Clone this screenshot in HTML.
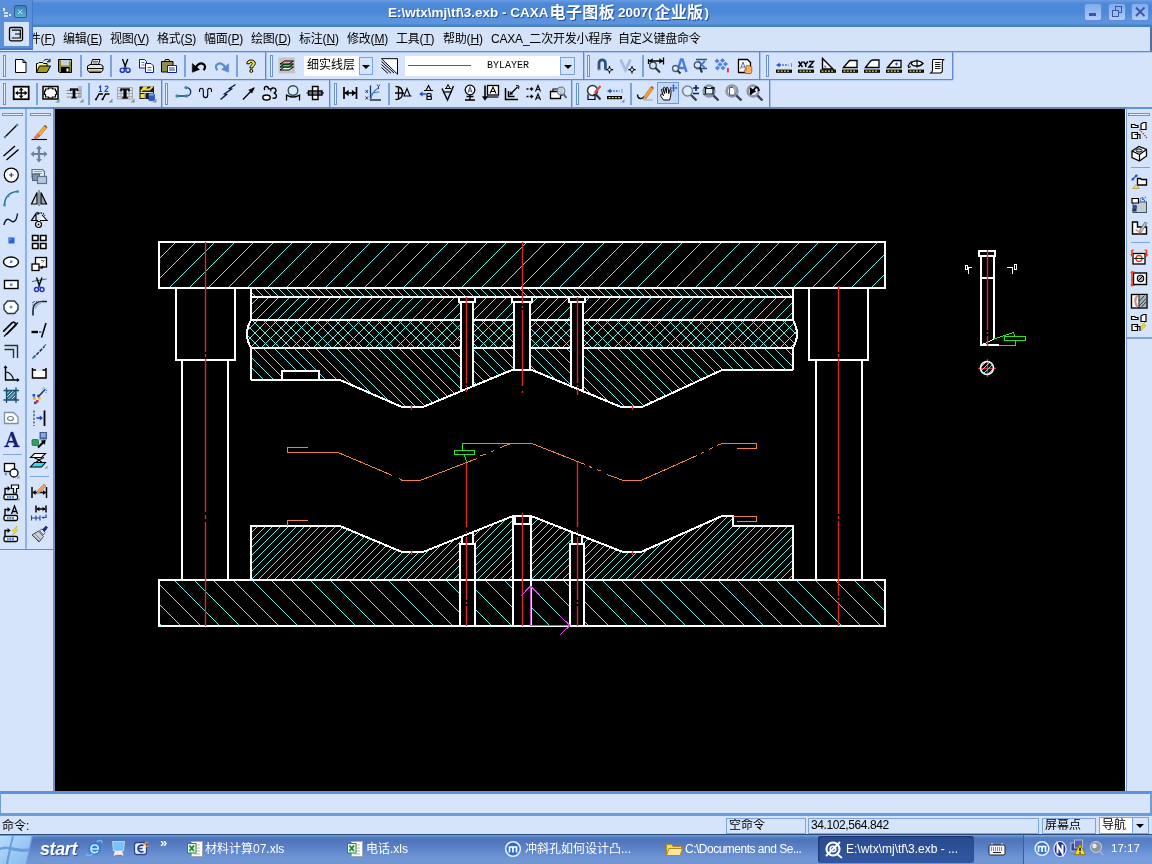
<!DOCTYPE html><html><head><meta charset="utf-8"><title>CAXA</title><style>
*{box-sizing:border-box;margin:0;padding:0}
html,body{width:1152px;height:864px;overflow:hidden;background:#d5e4fa}
body{position:relative;font-family:"Liberation Sans","Noto Sans CJK SC",sans-serif;font-size:12px;color:#000}
.abs{position:absolute}
#menu,#title,#status,#task,.gt{-webkit-mask-image:linear-gradient(#000,#000);mask-image:linear-gradient(#000,#000)}
#title{left:0;top:0;width:1152px;height:27px;background:linear-gradient(#6c9ee2 0,#5a90dc 2px,#4c88d8 4px,#4c88d8 12px,#5a94dc 19px,#5a94dc 24px,#4a80c8 25px,#4a80c8 27px)}
#title .t{position:absolute;color:#fff;font-weight:bold;white-space:pre;text-shadow:1px 1px 0 #2a4f96}
.wb{position:absolute;top:3px;width:18px;height:18px;border:1px solid #5f8cd8;border-radius:3px;background:linear-gradient(#80acec,#98bcf2 55%,#b0cef8)}
#menu{left:0;top:27px;width:1152px;height:24px;background:#d5e3f8}
#menu span{position:absolute;top:2px;white-space:nowrap;font-size:12px;letter-spacing:-0.2px}
#menu u{text-decoration:underline}
#tb{left:0;top:51px;width:1152px;height:57px;background:#d5e4fa}
.hl{position:absolute;height:1px;background:#7ba4dc}
.vl{position:absolute;width:1px;background:#7ba4dc}
#canvas{left:55px;top:109px;width:1070px;height:682px;background:#000}
#leftp{left:0;top:108px;width:55px;height:683px;background:#d5e4fa;border-right:2px solid #7890c0}
#rightp{left:1125px;top:108px;width:27px;height:683px;background:#d5e4fa;border-left:1px solid #e4f0fe;box-shadow:inset 1px 0 0 #7c9cd0}
#cmd{left:0;top:791px;width:1152px;height:25px;background:#d6e5fa;border-top:3px solid #5f92da;border-bottom:3px solid #6d9cdc;border-left:1px solid #6d9cdc;border-right:2px solid #6d9cdc}
#status{left:0;top:816px;width:1152px;height:18px;background:#d5e4fa}
.sf{position:absolute;top:2px;height:16px;border:1px solid #7ba4dc;font-size:12px;line-height:13px;padding-left:2px;white-space:nowrap;overflow:hidden}
#task{left:0;top:834px;width:1152px;height:30px;background:linear-gradient(#2c4c7c 0,#2c4c7c 1px,#6c98d0 1px,#6c98d0 2px,#5482c4 3px,#4c74bc 5px,#5678bc 9px,#5a82c8 14px,#668cd0 19px,#7096d4 25px,#7096d4 30px);color:#fff}
#task .b{position:absolute;top:0;height:30px;font-size:12px;line-height:30px;white-space:nowrap;color:#fff}
.grip{position:absolute;width:3px;border:1px solid #6a92d0;background:#e4eefc}
.gripH{position:absolute;height:3px;border:1px solid #6a92d0;background:#e4eefc}
.ic{position:absolute;overflow:visible}
</style></head><body><div id="title" class="abs"><span class="t" style="left:388px;top:5px;font-size:13.5px">E:\wtx\mj\tf\3.exb - CAXA</span><span class="t" style="left:549.5px;top:-1px;font-size:16px;letter-spacing:0.4px">电子图板</span><span class="t" style="left:618px;top:5px;font-size:13.5px">2007(</span><span class="t" style="left:654.5px;top:-1px;font-size:16px;letter-spacing:0.3px">企业版</span><span class="t" style="left:704.5px;top:5px;font-size:13.5px">)</span><div class="wb" style="left:1084px"><div style="position:absolute;left:4px;top:9px;width:7px;height:3px;background:#3a56a0"></div></div><div class="wb" style="left:1108px"><div style="position:absolute;left:6px;top:2px;width:7px;height:7px;border:1.5px solid #3a56a0"></div><div style="position:absolute;left:3px;top:5.500px;width:7px;height:7px;border:1.5px solid #3a56a0;background:#9cc0f0"></div></div><div class="wb" style="left:1131px"><svg width="18" height="18" style="position:absolute;left:-1px;top:-1px"><path d="M5 4.500l8.500 8.500M13.500 4.500l-8.500 8.500" stroke="#3a56a0" stroke-width="1.800"/></svg></div></div><div id="menu" class="abs"><span style="left:17px">文件(<u>F</u>)</span><span style="left:63px">编辑(<u>E</u>)</span><span style="left:110px">视图(<u>V</u>)</span><span style="left:157px">格式(<u>S</u>)</span><span style="left:204px">幅面(<u>P</u>)</span><span style="left:251px">绘图(<u>D</u>)</span><span style="left:299px">标注(<u>N</u>)</span><span style="left:347px">修改(<u>M</u>)</span><span style="left:396px">工具(<u>T</u>)</span><span style="left:443px">帮助(<u>H</u>)</span><span style="left:491px">CAXA_二次开发小程序</span><span style="left:618px">自定义键盘命令</span></div><div id="tb" class="abs"></div><div class="abs" style="left:1150px;top:27px;width:2px;height:25px;background:#54709c"></div><div id="leftp" class="abs"></div><div id="rightp" class="abs"></div><div id="canvas" class="abs"><svg width="1070" height="682" viewBox="55 109 1070 682" shape-rendering="crispEdges" style="position:absolute;left:0;top:0"><defs><clipPath id="cTop"><path d="M159 242L885 242L885 288L159 288Z"/></clipPath><clipPath id="cThin"><path d="M251 288L793 288L793 297L251 297Z"/></clipPath><clipPath id="cP2"><path d="M251 297L793 297L793 320L251 320Z"/></clipPath><clipPath id="cRub"><path d="M251 320L793 320L796 325L797 334L796 343L793 348L251 348L248 343L247 334L248 325Z"/></clipPath><clipPath id="cUD"><path d="M251 348L793 348L793 370L722 370L642 407L621 407L532 370L512 370L423 407L402 407L340 380L251 380Z"/></clipPath><clipPath id="cLD"><path d="M251 526L340 526L402 552L423 552L513 516L531 516L623 552L641 552L722 516L733 516L733 526L793 526L793 580L251 580Z"/></clipPath><clipPath id="cBot"><path d="M159 580L885 580L885 626L159 626Z"/></clipPath></defs><path clip-path="url(#cTop)" d="M130.0 288L176.0 242M150.0 288L196.0 242M169.0 288L215.0 242M189.0 288L235.0 242M208.0 288L254.0 242M228.0 288L274.0 242M247.0 288L293.0 242M267.0 288L313.0 242M286.0 288L332.0 242M306.0 288L352.0 242M325.0 288L371.0 242M345.0 288L391.0 242M364.0 288L410.0 242M384.0 288L430.0 242M403.0 288L449.0 242M422.0 288L468.0 242M442.0 288L488.0 242M461.0 288L507.0 242M481.0 288L527.0 242M500.0 288L546.0 242M520.0 288L566.0 242M539.0 288L585.0 242M559.0 288L605.0 242M578.0 288L624.0 242M598.0 288L644.0 242M617.0 288L663.0 242M637.0 288L683.0 242M656.0 288L702.0 242M676.0 288L722.0 242M695.0 288L741.0 242M715.0 288L761.0 242M734.0 288L780.0 242M754.0 288L800.0 242M773.0 288L819.0 242M793.0 288L839.0 242M812.0 288L858.0 242M832.0 288L878.0 242M851.0 288L897.0 242M871.0 288L917.0 242" stroke="#68ece2" stroke-width="1" fill="none" shape-rendering="geometricPrecision"/><path clip-path="url(#cThin)" d="M247.0 288L256.0 297M255.0 288L264.0 297M263.0 288L272.0 297M270.0 288L279.0 297M278.0 288L287.0 297M286.0 288L295.0 297M294.0 288L303.0 297M301.0 288L310.0 297M309.0 288L318.0 297M317.0 288L326.0 297M325.0 288L334.0 297M333.0 288L342.0 297M340.0 288L349.0 297M348.0 288L357.0 297M356.0 288L365.0 297M364.0 288L373.0 297M371.0 288L380.0 297M379.0 288L388.0 297M387.0 288L396.0 297M395.0 288L404.0 297M402.0 288L411.0 297M410.0 288L419.0 297M418.0 288L427.0 297M426.0 288L435.0 297M434.0 288L443.0 297M441.0 288L450.0 297M449.0 288L458.0 297M457.0 288L466.0 297M465.0 288L474.0 297M472.0 288L481.0 297M480.0 288L489.0 297M488.0 288L497.0 297M496.0 288L505.0 297M503.0 288L512.0 297M511.0 288L520.0 297M519.0 288L528.0 297M527.0 288L536.0 297M535.0 288L544.0 297M542.0 288L551.0 297M550.0 288L559.0 297M558.0 288L567.0 297M566.0 288L575.0 297M573.0 288L582.0 297M581.0 288L590.0 297M589.0 288L598.0 297M597.0 288L606.0 297M604.0 288L613.0 297M612.0 288L621.0 297M620.0 288L629.0 297M628.0 288L637.0 297M636.0 288L645.0 297M643.0 288L652.0 297M651.0 288L660.0 297M659.0 288L668.0 297M667.0 288L676.0 297M674.0 288L683.0 297M682.0 288L691.0 297M690.0 288L699.0 297M698.0 288L707.0 297M705.0 288L714.0 297M713.0 288L722.0 297M721.0 288L730.0 297M729.0 288L738.0 297M737.0 288L746.0 297M744.0 288L753.0 297M752.0 288L761.0 297M760.0 288L769.0 297M768.0 288L777.0 297M775.0 288L784.0 297M783.0 288L792.0 297M791.0 288L800.0 297" stroke="#68ece2" stroke-width="1" fill="none" shape-rendering="geometricPrecision"/><path clip-path="url(#cP2)" d="M236.0 320L259.0 297M246.0 320L269.0 297M256.0 320L279.0 297M267.0 320L290.0 297M277.0 320L300.0 297M287.0 320L310.0 297M298.0 320L321.0 297M308.0 320L331.0 297M318.0 320L341.0 297M329.0 320L352.0 297M339.0 320L362.0 297M350.0 320L373.0 297M360.0 320L383.0 297M370.0 320L393.0 297M381.0 320L404.0 297M391.0 320L414.0 297M401.0 320L424.0 297M412.0 320L435.0 297M422.0 320L445.0 297M432.0 320L455.0 297M443.0 320L466.0 297M453.0 320L476.0 297M464.0 320L487.0 297M474.0 320L497.0 297M484.0 320L507.0 297M495.0 320L518.0 297M505.0 320L528.0 297M515.0 320L538.0 297M526.0 320L549.0 297M536.0 320L559.0 297M546.0 320L569.0 297M557.0 320L580.0 297M567.0 320L590.0 297M578.0 320L601.0 297M588.0 320L611.0 297M598.0 320L621.0 297M609.0 320L632.0 297M619.0 320L642.0 297M629.0 320L652.0 297M640.0 320L663.0 297M650.0 320L673.0 297M661.0 320L684.0 297M671.0 320L694.0 297M681.0 320L704.0 297M692.0 320L715.0 297M702.0 320L725.0 297M712.0 320L735.0 297M723.0 320L746.0 297M733.0 320L756.0 297M743.0 320L766.0 297M754.0 320L777.0 297M764.0 320L787.0 297M775.0 320L798.0 297M785.0 320L808.0 297" stroke="#68ece2" stroke-width="1" fill="none" shape-rendering="geometricPrecision"/><path clip-path="url(#cRub)" d="M219.0 348L247.0 320M230.0 348L258.0 320M240.0 348L268.0 320M250.0 348L278.0 320M261.0 348L289.0 320M271.0 348L299.0 320M281.0 348L309.0 320M292.0 348L320.0 320M302.0 348L330.0 320M313.0 348L341.0 320M323.0 348L351.0 320M333.0 348L361.0 320M344.0 348L372.0 320M354.0 348L382.0 320M365.0 348L393.0 320M375.0 348L403.0 320M385.0 348L413.0 320M396.0 348L424.0 320M406.0 348L434.0 320M416.0 348L444.0 320M427.0 348L455.0 320M437.0 348L465.0 320M448.0 348L476.0 320M458.0 348L486.0 320M468.0 348L496.0 320M479.0 348L507.0 320M489.0 348L517.0 320M499.0 348L527.0 320M510.0 348L538.0 320M520.0 348L548.0 320M531.0 348L559.0 320M541.0 348L569.0 320M551.0 348L579.0 320M562.0 348L590.0 320M572.0 348L600.0 320M582.0 348L610.0 320M593.0 348L621.0 320M603.0 348L631.0 320M614.0 348L642.0 320M624.0 348L652.0 320M634.0 348L662.0 320M645.0 348L673.0 320M655.0 348L683.0 320M666.0 348L694.0 320M676.0 348L704.0 320M686.0 348L714.0 320M697.0 348L725.0 320M707.0 348L735.0 320M717.0 348L745.0 320M728.0 348L756.0 320M738.0 348L766.0 320M749.0 348L777.0 320M759.0 348L787.0 320M769.0 348L797.0 320M780.0 348L808.0 320M790.0 348L818.0 320" stroke="#68ece2" stroke-width="1" fill="none" shape-rendering="geometricPrecision"/><path clip-path="url(#cRub)" d="M221.0 320L249.0 348M232.0 320L260.0 348M242.0 320L270.0 348M252.0 320L280.0 348M263.0 320L291.0 348M273.0 320L301.0 348M283.0 320L311.0 348M294.0 320L322.0 348M304.0 320L332.0 348M315.0 320L343.0 348M325.0 320L353.0 348M335.0 320L363.0 348M346.0 320L374.0 348M356.0 320L384.0 348M366.0 320L394.0 348M377.0 320L405.0 348M387.0 320L415.0 348M398.0 320L426.0 348M408.0 320L436.0 348M418.0 320L446.0 348M429.0 320L457.0 348M439.0 320L467.0 348M450.0 320L478.0 348M460.0 320L488.0 348M470.0 320L498.0 348M481.0 320L509.0 348M491.0 320L519.0 348M501.0 320L529.0 348M512.0 320L540.0 348M522.0 320L550.0 348M533.0 320L561.0 348M543.0 320L571.0 348M553.0 320L581.0 348M564.0 320L592.0 348M574.0 320L602.0 348M584.0 320L612.0 348M595.0 320L623.0 348M605.0 320L633.0 348M616.0 320L644.0 348M626.0 320L654.0 348M636.0 320L664.0 348M647.0 320L675.0 348M657.0 320L685.0 348M668.0 320L696.0 348M678.0 320L706.0 348M688.0 320L716.0 348M699.0 320L727.0 348M709.0 320L737.0 348M719.0 320L747.0 348M730.0 320L758.0 348M740.0 320L768.0 348M751.0 320L779.0 348M761.0 320L789.0 348M771.0 320L799.0 348M782.0 320L810.0 348M792.0 320L820.0 348" stroke="#68ece2" stroke-width="1" fill="none" shape-rendering="geometricPrecision"/><path clip-path="url(#cUD)" d="M201.0 348L261.0 408M211.0 348L271.0 408M221.0 348L281.0 408M232.0 348L292.0 408M242.0 348L302.0 408M253.0 348L313.0 408M263.0 348L323.0 408M274.0 348L334.0 408M284.0 348L344.0 408M294.0 348L354.0 408M305.0 348L365.0 408M315.0 348L375.0 408M326.0 348L386.0 408M336.0 348L396.0 408M347.0 348L407.0 408M357.0 348L417.0 408M367.0 348L427.0 408M378.0 348L438.0 408M388.0 348L448.0 408M399.0 348L459.0 408M409.0 348L469.0 408M420.0 348L480.0 408M430.0 348L490.0 408M440.0 348L500.0 408M451.0 348L511.0 408M461.0 348L521.0 408M472.0 348L532.0 408M482.0 348L542.0 408M493.0 348L553.0 408M503.0 348L563.0 408M513.0 348L573.0 408M524.0 348L584.0 408M534.0 348L594.0 408M545.0 348L605.0 408M555.0 348L615.0 408M566.0 348L626.0 408M576.0 348L636.0 408M586.0 348L646.0 408M597.0 348L657.0 408M607.0 348L667.0 408M618.0 348L678.0 408M628.0 348L688.0 408M639.0 348L699.0 408M649.0 348L709.0 408M659.0 348L719.0 408M670.0 348L730.0 408M680.0 348L740.0 408M691.0 348L751.0 408M701.0 348L761.0 408M712.0 348L772.0 408M722.0 348L782.0 408M732.0 348L792.0 408M743.0 348L803.0 408M753.0 348L813.0 408M764.0 348L824.0 408M774.0 348L834.0 408M785.0 348L845.0 408" stroke="#68ece2" stroke-width="1" fill="none" shape-rendering="geometricPrecision"/><path clip-path="url(#cLD)" d="M188.0 580L254.0 514M196.0 580L262.0 514M204.0 580L270.0 514M212.0 580L278.0 514M219.0 580L285.0 514M227.0 580L293.0 514M235.0 580L301.0 514M243.0 580L309.0 514M251.0 580L317.0 514M258.0 580L324.0 514M266.0 580L332.0 514M274.0 580L340.0 514M282.0 580L348.0 514M290.0 580L356.0 514M297.0 580L363.0 514M305.0 580L371.0 514M313.0 580L379.0 514M321.0 580L387.0 514M329.0 580L395.0 514M336.0 580L402.0 514M344.0 580L410.0 514M352.0 580L418.0 514M360.0 580L426.0 514M367.0 580L433.0 514M375.0 580L441.0 514M383.0 580L449.0 514M391.0 580L457.0 514M399.0 580L465.0 514M406.0 580L472.0 514M414.0 580L480.0 514M422.0 580L488.0 514M430.0 580L496.0 514M438.0 580L504.0 514M445.0 580L511.0 514M453.0 580L519.0 514M461.0 580L527.0 514M469.0 580L535.0 514M477.0 580L543.0 514M484.0 580L550.0 514M492.0 580L558.0 514M500.0 580L566.0 514M508.0 580L574.0 514M516.0 580L582.0 514M523.0 580L589.0 514M531.0 580L597.0 514M539.0 580L605.0 514M547.0 580L613.0 514M554.0 580L620.0 514M562.0 580L628.0 514M570.0 580L636.0 514M578.0 580L644.0 514M586.0 580L652.0 514M593.0 580L659.0 514M601.0 580L667.0 514M609.0 580L675.0 514M617.0 580L683.0 514M625.0 580L691.0 514M632.0 580L698.0 514M640.0 580L706.0 514M648.0 580L714.0 514M656.0 580L722.0 514M664.0 580L730.0 514M671.0 580L737.0 514M679.0 580L745.0 514M687.0 580L753.0 514M695.0 580L761.0 514M702.0 580L768.0 514M710.0 580L776.0 514M718.0 580L784.0 514M726.0 580L792.0 514M734.0 580L800.0 514M741.0 580L807.0 514M749.0 580L815.0 514M757.0 580L823.0 514M765.0 580L831.0 514M773.0 580L839.0 514M780.0 580L846.0 514M788.0 580L854.0 514" stroke="#68ece2" stroke-width="1" fill="none" shape-rendering="geometricPrecision"/><path clip-path="url(#cBot)" d="M116.0 580L162.0 626M135.0 580L181.0 626M155.0 580L201.0 626M174.0 580L220.0 626M194.0 580L240.0 626M213.0 580L259.0 626M233.0 580L279.0 626M252.0 580L298.0 626M271.0 580L317.0 626M291.0 580L337.0 626M310.0 580L356.0 626M330.0 580L376.0 626M349.0 580L395.0 626M369.0 580L415.0 626M388.0 580L434.0 626M407.0 580L453.0 626M427.0 580L473.0 626M446.0 580L492.0 626M466.0 580L512.0 626M485.0 580L531.0 626M504.0 580L550.0 626M524.0 580L570.0 626M543.0 580L589.0 626M563.0 580L609.0 626M582.0 580L628.0 626M602.0 580L648.0 626M621.0 580L667.0 626M640.0 580L686.0 626M660.0 580L706.0 626M679.0 580L725.0 626M699.0 580L745.0 626M718.0 580L764.0 626M737.0 580L783.0 626M757.0 580L803.0 626M776.0 580L822.0 626M796.0 580L842.0 626M815.0 580L861.0 626M835.0 580L881.0 626M854.0 580L900.0 626M873.0 580L919.0 626" stroke="#68ece2" stroke-width="1" fill="none" shape-rendering="geometricPrecision"/><path d="M459 297L475 297L475 302L473 302L473 420L461 420L461 302L459 302ZM512 297L532 297L532 302L530 302L530 420L514 420L514 302L512 302ZM569 297L585 297L585 302L583 302L583 420L571 420L571 302L569 302ZM282 371L319 371L319 381L282 381ZM460 544L462 544L462 500L473 500L473 544L475 544L475 626L460 626ZM513 524L515 524L515 500L530 500L530 524L531 524L531 626L513 626ZM570 544L572 544L572 500L582 500L582 544L584 544L584 626L570 626Z" fill="#000"/><path d="M159 242L885 242L885 288L159 288ZM159 580L885 580L885 626L159 626ZM176 288L176 360L235 360L235 288M182 360L182 580M228 360L228 580M809 288L809 360L868 360L868 288M816 360L816 580M862 360L862 580M251 288L251 320M793 288L793 320M251 348L251 380M793 348L793 370M251 297L793 297M251 320L461 320M473 320L514 320M530 320L571 320M583 320L793 320M251 348L461 348M473 348L514 348M530 348L571 348M583 348L793 348M251 320Q243 334 251 348M793 320Q801 334 793 348M251 380L340 380L402 407L423 407L512 370L532 370L621 407L642 407L722 370L793 370M282 380L282 371L319 371L319 380M459 297L459 302L475 302L475 297M461 302L461 391.202M473 302L473 386.213M512 297L512 302L532 302L532 297M514 302L514 370M530 302L530 370M569 297L569 302L585 302L585 297M571 302L571 386.213M583 302L583 391.202M251 580L251 526L340 526L402 552L423 552L513 516L531 516L623 552L641 552L722 516L733 516L733 526L793 526L793 580M462 536.4L462 544M473 532L473 544M460 626L460 544L475 544L475 626M515 516L515 524M530 516L530 524M513 516L513 626M531 516L531 626M513 524L531 524M572 532.043L572 544M582 535.957L582 544M570 626L570 544L584 544L584 626M979 251L995 251L995 256L979 256ZM981 256L981 345L999 345M994 256L994 339M981 278L994 278" stroke="#ffffff" stroke-width="2" fill="none" stroke-linejoin="miter"/><path d="M982.5 344.5L994 339" stroke="#fff" stroke-width="1" fill="none"/><path d="M205.5 242V352M205.5 354V357M205.5 359V512M205.5 515V519M205.5 522V626M838.5 286V352M838.5 354V357M838.5 359V514M838.5 516V519M838.5 521V596M838.5 598V600M838.5 602V626M466.5 297V383M466.5 385V387M466.5 389V392M466.5 461V527M466.5 531V533M466.5 537V600M466.5 602V604M466.5 606V626M522.5 242V304M522.5 306V308M522.5 310V386M522.5 391V393M522.5 513V626M577.5 297V383M577.5 385V387M577.5 389V395M577.5 462V527M577.5 531V533M577.5 537V600M577.5 602V604M577.5 606V626M411.5 405V410M632.5 405V410M411.5 551V555M632.5 551V555M987.5 250V330M987.5 332V334M987.5 336V346M978 368.5H996M987.5 359V377" stroke="#dc2630" stroke-width="1.4" fill="none" shape-rendering="geometricPrecision"/><path d="M308.0 447.5L287.5 447.5L287.5 452.5L338.0 452.5L392.5 475.5M399.0 478.5L402.5 480.5L420.0 480.5L477.0 458.5M480.5 456.0L486.0 454.0M491.5 451.5L494.5 450.5M500.5 447.5L511.0 443.5L532.0 443.5L585.0 464.5M589.0 466.5L592.0 467.5M597.0 469.5L601.0 471.0M607.0 474.5L623.5 480.5L641.0 480.5L697.0 455.5M701.0 453.5L704.0 452.0M709.0 449.5L713.0 447.5M717.0 445.5L722.0 443.5L756.5 443.5L756.5 448.5L737.0 448.5M308.0 520.5L287.5 520.5L287.5 525.5M733.0 516.5L756.5 516.5L756.5 521.5L737.0 521.5" stroke="#e8873c" stroke-width="1" fill="none"/><path d="M462.5 450.5V443.5H511M454.5 450.5H474.5V454.5H454.5ZM464 454.5L466.5 461M994 339L1013.5 332.5L1014.5 336M1004.5 336.5H1025.5V340.5H1004.5ZM1015.5 340.5V345.5H999" stroke="#30e030" stroke-width="1" fill="none"/><path d="M530.5 625.5V586M530.5 586L521 596M530.5 586L540 595.5M530.5 625.5H570M570 625.5L560 616M570 625.5L560.5 634.5" stroke="#e040e8" stroke-width="1" fill="none"/><clipPath id="cCirc"><circle cx="987" cy="368" r="6.5"/></clipPath><path clip-path="url(#cCirc)" d="M962.0 377L979.0 360M967.0 377L984.0 360M971.0 377L988.0 360M975.0 377L992.0 360M980.0 377L997.0 360M985.0 377L1002.0 360M989.0 377L1006.0 360M993.0 377L1010.0 360" stroke="#68ece2" stroke-width="1" fill="none" shape-rendering="geometricPrecision"/><circle cx="987" cy="368" r="6.5" stroke="#e8ffff" stroke-width="1.6" fill="none" shape-rendering="auto"/><path d="M965 265H967V269H965ZM967 267.5H972M968.5 267.5V274M1007 267.5H1013M1012.5 267.5V274M1014 264H1016V269H1014Z" stroke="#fff" stroke-width="1" fill="none"/></svg></div><div class="hl" style="left:0px;top:51px;width:1152px;height:1px;background:#5f8acc"></div><div class="hl" style="left:0px;top:52px;width:1152px;height:1px;background:#b0c8ee"></div><div class="hl" style="left:0px;top:79px;width:953px;height:1px;background:#5f8acc"></div><div class="hl" style="left:0px;top:80px;width:953px;height:1px;background:#b8cef0"></div><div class="hl" style="left:0px;top:107px;width:53px;height:2px;background:#5f92d6"></div><div class="hl" style="left:53px;top:107px;width:1073px;height:2px;background:#6c84a4"></div><div class="grip" style="left:3px;top:55px;height:22px"></div><div class="grip" style="left:270px;top:55px;height:22px"></div><div class="grip" style="left:587px;top:55px;height:22px"></div><div class="grip" style="left:766px;top:55px;height:22px"></div><div class="vl" style="left:265px;top:52px;height:27px;width:1px;background:#5f8acc"></div><div class="vl" style="left:266px;top:52px;height:27px;width:1px;background:#a8c2ea"></div><div class="vl" style="left:583px;top:52px;height:27px;width:1px;background:#5f8acc"></div><div class="vl" style="left:584px;top:52px;height:27px;width:1px;background:#a8c2ea"></div><div class="vl" style="left:759px;top:52px;height:27px;width:1px;background:#5f8acc"></div><div class="vl" style="left:760px;top:52px;height:27px;width:1px;background:#a8c2ea"></div><div class="vl" style="left:952px;top:52px;height:27px;width:1px;background:#5f8acc"></div><div class="vl" style="left:953px;top:52px;height:27px;width:1px;background:#a8c2ea"></div><div class="vl" style="left:80px;top:55px;height:22px;width:2px;background:#7ba4dc"></div><div class="vl" style="left:110px;top:55px;height:22px;width:2px;background:#7ba4dc"></div><div class="vl" style="left:184px;top:55px;height:22px;width:2px;background:#7ba4dc"></div><div class="vl" style="left:236px;top:55px;height:22px;width:2px;background:#7ba4dc"></div><div class="vl" style="left:642px;top:55px;height:22px;width:2px;background:#7ba4dc"></div><svg class="ic" style="left:11px;top:56px" width="20" height="20" viewBox="0 0 20 20"><path d="M4.5 3.5h7.5l3 3v10h-10.5z" fill="#fff" stroke="#000" stroke-width="1" /><path d="M12 3.5v3h3" fill="none" stroke="#000" stroke-width="1" /></svg><svg class="ic" style="left:32.5px;top:56px" width="20" height="20" viewBox="0 0 20 20"><path d="M3.5 16.5v-9h1.5l1-1h3.500l1 1h3.500v2.500" fill="#f6f0a0" stroke="#000" stroke-width="1" /><path d="M3.500 16.500l3-6.500h11l-3.500 6.500z" fill="#a09c18" stroke="#000" stroke-width="1" /><path d="M10.500 5c2-2.200 4.500-2.200 6 0" fill="none" stroke="#000" stroke-width="1" /><path d="M17 2.800v3h-3" fill="none" stroke="#000" stroke-width="1" /></svg><svg class="ic" style="left:55px;top:56px" width="20" height="20" viewBox="0 0 20 20"><path d="M3.500 3.500h13v13h-12l-1-1z" fill="#8c8c1c" stroke="#000" stroke-width="1" /><rect x="6" y="4" width="8" height="5.500" fill="#c4cce0"/><rect x="6" y="11" width="8.500" height="5.500" fill="#000"/><rect x="11.500" y="12.500" width="2" height="3" fill="#fff"/><rect x="14.800" y="4.500" width="1" height="1.500" fill="#fff"/></svg><svg class="ic" style="left:85px;top:56px" width="20" height="20" viewBox="0 0 20 20"><path d="M6 8.500l1.500-5h7.500l-1.500 5z" fill="#fff" stroke="#000" stroke-width="1" /><path d="M8 5.300h5M7.600 7h5" fill="none" stroke="#000" stroke-width="0.7" /><path d="M2.500 10l2.500-1.500h10.500l2.500 1.500v4l-2 2.500h-11.500l-2-2.500z" fill="#e4e4e0" stroke="#000" stroke-width="1" /><path d="M2.500 12.500h15.500" fill="none" stroke="#000" stroke-width="1" /><rect x="4.500" y="13.600" width="11.500" height="1.600" fill="#c8bc88"/><path d="M4.500 16h11.500" fill="none" stroke="#000" stroke-width="1" /></svg><svg class="ic" style="left:115px;top:56px" width="20" height="20" viewBox="0 0 20 20"><path d="M7.500 3l3.200 8.500M12.800 3l-3.200 8.500" fill="none" stroke="#000" stroke-width="1.4" /><circle cx="7.300" cy="14.200" r="2.100" fill="none" stroke="#2434b0" stroke-width="1.400"/><circle cx="13" cy="14.200" r="2.100" fill="none" stroke="#2434b0" stroke-width="1.400"/><path d="M10.800 11l-2.200 1.600M9.600 11l2.200 1.600" fill="none" stroke="#2434b0" stroke-width="1.2" /></svg><svg class="ic" style="left:136px;top:56px" width="20" height="20" viewBox="0 0 20 20"><path d="M3.500 3.500h5l2 2v6.500h-7z" fill="#fff" stroke="#10208c" stroke-width="1" /><path d="M5.500 6.500h3M5.500 9h3" fill="none" stroke="#10208c" stroke-width="0.7" /><path d="M9.500 7.500h5.500l2.500 2.500v6.500h-8z" fill="#fff" stroke="#10208c" stroke-width="1" /><path d="M11.500 11.500h4M11.500 14h4" fill="none" stroke="#10208c" stroke-width="0.7" /></svg><svg class="ic" style="left:159px;top:56px" width="20" height="20" viewBox="0 0 20 20"><path d="M2.500 5.500h11.500v10.500h-11.500z" fill="#8c8c54" stroke="#000" stroke-width="1" /><path d="M5.500 5.500l1-2h3.500l1 2z" fill="#e8dc8c" stroke="#000" stroke-width="1" /><path d="M8.500 9.500h9v7h-9z" fill="#fff" stroke="#10208c" stroke-width="1" /><path d="M10 12h5.500M10 14h6" fill="none" stroke="#10208c" stroke-width="0.9" /></svg><svg class="ic" style="left:188.5px;top:56px" width="20" height="20" viewBox="0 0 20 20"><path d="M3.300 7.500v8.800l7.200-2.800z" fill="#000" stroke="#000" stroke-width="0.5" /><path d="M6.500 12.500c1.500-4.500 5-6 7.800-4.500c2.500 1.500 2.200 4.500.2 6.200" fill="none" stroke="#000" stroke-width="2.2" /></svg><svg class="ic" style="left:211.5px;top:56px" width="20" height="20" viewBox="0 0 20 20"><path d="M16.700 7.500v8.800l-7.200-2.800z" fill="#5a8cc8" stroke="#5a8cc8" stroke-width="0.5" /><path d="M13.500 12.500c-1.500-4.500-5-6-7.800-4.500c-2.500 1.500-2.200 4.500-.2 6.200" fill="none" stroke="#5a8cc8" stroke-width="2.2" /></svg><svg class="ic" style="left:241px;top:56px" width="20" height="20" viewBox="0 0 20 20"><path d="M5.800 7.800c0-2.600 1.800-3.800 4.200-3.800s4.300 1.300 4.300 3.400c0 2.200-2.600 2.700-2.600 4.600h-2.800c0-2.600 2.400-3.100 2.400-4.600c0-.7-.5-1.100-1.300-1.100s-1.400.500-1.400 1.500z" fill="#f8f040" stroke="#000" stroke-width="1" /><circle cx="10.300" cy="14.900" r="1.500" fill="#f8f040" stroke="#000"/></svg><svg class="ic" style="left:276px;top:56px" width="20" height="20" viewBox="0 0 20 20"><rect x="2.500" y="1.500" width="16.500" height="16" fill="#c4c4c4"/><path d="M4 14l4.500-3h9l-4.500 3z" fill="#fff" stroke="#000" stroke-width="1" /><path d="M4 11l4.500-3h9l-4.500 3z" fill="#40e060" stroke="#000" stroke-width="1" /><path d="M4 8l4.500-3h9l-4.500 3z" fill="#f4a8a8" stroke="#000" stroke-width="1" /></svg><svg class="ic" style="left:379px;top:56px" width="20" height="20" viewBox="0 0 20 20"><path d="M2.500 2.700h16v15.500z" fill="#fff" stroke="#000" stroke-width="1" /><path d="M2.500 5.500l12.500 11.500M2.500 8.500l9.500 8.700M2.500 11.500l6.500 6" fill="none" stroke="#000" stroke-width="1" /></svg><svg class="ic" style="left:595px;top:56px" width="20" height="20" viewBox="0 0 20 20"><path d="M4 14v-7a3.200 3.200 0 0 1 6.400 0v7" fill="none" stroke="#34507c" stroke-width="2.8" /><path d="M2.600 13.700h2.800M8.800 13.700h2.800" fill="none" stroke="#8a9ab4" stroke-width="1.4" /><path d="M14.500 10v7.500M10.800 13.700h7.400" fill="none" stroke="#000" stroke-width="1.2" /><circle cx="14.500" cy="13.700" r="1.700" fill="#e8f0fc" stroke="#000" stroke-width=".9"/></svg><svg class="ic" style="left:617.5px;top:56px" width="20" height="20" viewBox="0 0 20 20"><path d="M2.500 3.500l5 10.500l5-10.500" fill="none" stroke="#a8bcdc" stroke-width="2.8" /><path d="M14 10v7.500M10.300 13.700h7.400" fill="none" stroke="#000" stroke-width="1.2" /><circle cx="14" cy="13.700" r="1.700" fill="#e8f0fc" stroke="#000" stroke-width=".9"/></svg><svg class="ic" style="left:646px;top:56px" width="20" height="20" viewBox="0 0 20 20"><path d="M2.500 3v5M17.500 1.500v7M3.500 5h13" fill="none" stroke="#000" stroke-width="1.3" /><path d="M13.500 2.500l3.500 2.500-3.500 2.500z" fill="#000" stroke="#000" stroke-width="0.3" /><path d="M6.500 2.500l-3.500 2.500 3.500 2.500z" fill="#000" stroke="#000" stroke-width="0.3" /><circle cx="7" cy="9.5" r="3.3" fill="#d4e4f4" stroke="#384858" stroke-width="1.300"/><path d="M9.31 11.81L14 16.5" fill="none" stroke="#283038" stroke-width="2" /></svg><svg class="ic" style="left:668.5px;top:56px" width="20" height="20" viewBox="0 0 20 20"><path d="M8 16l4-12.500h1.500l4 12.500M10 12h6" fill="none" stroke="#4a7cd4" stroke-width="2.4" /><circle cx="6.5" cy="12.5" r="3" fill="#d8e8f8" stroke="#506070" stroke-width="1.300"/><path d="M8.6 14.6L11.5 17.5" fill="none" stroke="#283038" stroke-width="2" /></svg><svg class="ic" style="left:691px;top:56px" width="20" height="20" viewBox="0 0 20 20"><path d="M5 3.500h11M5 12.500h11" fill="none" stroke="#34507c" stroke-width="1.4" /><path d="M7 5l7 7M14 5l-7 7" fill="none" stroke="#4a7cd4" stroke-width="1.8" /><circle cx="6.5" cy="9" r="3.2" fill="#d8e8f8" stroke="#405060" stroke-width="1.300"/><path d="M8.74 11.24L11 16.5" fill="none" stroke="#283038" stroke-width="2" /></svg><svg class="ic" style="left:712px;top:56px" width="20" height="20" viewBox="0 0 20 20"><path d="M5 3l2.200 2-2.200 2-2.200-2z" fill="#4a84e0" stroke="#3a6cc8" stroke-width="0.4" /><path d="M10.5 2.5l2.200 2-2.200 2-2.200-2z" fill="#4a84e0" stroke="#3a6cc8" stroke-width="0.4" /><path d="M8 6.5l2.200 2-2.200 2-2.200-2z" fill="#4a84e0" stroke="#3a6cc8" stroke-width="0.4" /><path d="M13.5 6l2.200 2-2.200 2-2.200-2z" fill="#4a84e0" stroke="#3a6cc8" stroke-width="0.4" /><path d="M5.5 10l2.200 2-2.200 2-2.200-2z" fill="#4a84e0" stroke="#3a6cc8" stroke-width="0.4" /><path d="M11 10l2.200 2-2.200 2-2.200-2z" fill="#4a84e0" stroke="#3a6cc8" stroke-width="0.4" /><rect x="15" y="12" width="1.800" height="4.500" fill="#e03030"/></svg><svg class="ic" style="left:735px;top:56px" width="20" height="20" viewBox="0 0 20 20"><path d="M3.500 3.500h9l3 3v10h-12z" fill="#fff" stroke="#000" stroke-width="1.3" /><path d="M5.500 13l2.500-7l2.500 7M6.500 11h3" fill="none" stroke="#5070a0" stroke-width="1" /><path d="M10.500 17.500c-1-2-1.500-3.500-.5-4l1 1v-4.500c.3-1 1.300-1 1.500 0c.4-1 1.400-.8 1.500.2c.500-.8 1.400-.5 1.500.4c.6-.5 1.300-.2 1.300.8v3.500c0 1.500-.5 2.200-1 2.800z" fill="#f4b060" stroke="#a05c10" stroke-width="0.8" /></svg><svg class="ic" style="left:773.5px;top:56px" width="20" height="20" viewBox="0 0 20 20"><rect x="2" y="13.600" width="16" height="3.200" fill="#000"/><path d="M3.500 15.200h13" fill="none" stroke="#f0e840" stroke-width="1.2" stroke-dasharray="2 1.200"/><path d="M5.500 9h9" fill="none" stroke="#2850c0" stroke-width="1.3" stroke-dasharray="1.500 1.300"/><path d="M2.500 9l3-1.800v3.600zM17.500 7v4" fill="#2850c0" stroke="#2850c0" stroke-width="0.6" /></svg><svg class="ic" style="left:796px;top:56px" width="20" height="20" viewBox="0 0 20 20"><rect x="2" y="13.600" width="16" height="3.200" fill="#000"/><path d="M3.500 15.200h13" fill="none" stroke="#f0e840" stroke-width="1.2" stroke-dasharray="2 1.200"/><path d="M2.500 5.500l4 5.500M6.500 5.500l-4 5.500M7.500 5.500l2.200 3l2.200-3M9.700 8.500v2.500M13 5.500h4.500l-4.500 5.500h4.500" fill="none" stroke="#000" stroke-width="1.5" /></svg><svg class="ic" style="left:817.5px;top:56px" width="20" height="20" viewBox="0 0 20 20"><rect x="2" y="13.600" width="16" height="3.200" fill="#000"/><path d="M3.500 15.200h13" fill="none" stroke="#f0e840" stroke-width="1.2" stroke-dasharray="2 1.200"/><path d="M4.500 2.500v10.500h10.500z" fill="#fff" stroke="#000" stroke-width="1.4" /><path d="M7 9.500v1.500h1.500" fill="none" stroke="#2850c0" stroke-width="1.2" /></svg><svg class="ic" style="left:839.5px;top:56px" width="20" height="20" viewBox="0 0 20 20"><rect x="2" y="13.600" width="16" height="3.200" fill="#000"/><path d="M3.500 15.200h13" fill="none" stroke="#f0e840" stroke-width="1.2" stroke-dasharray="2 1.200"/><path d="M3.500 11.500l6-7h7.500v7z" fill="#fff" stroke="#000" stroke-width="1.3" /></svg><svg class="ic" style="left:861.5px;top:56px" width="20" height="20" viewBox="0 0 20 20"><rect x="2" y="13.600" width="16" height="3.200" fill="#000"/><path d="M3.500 15.200h13" fill="none" stroke="#f0e840" stroke-width="1.2" stroke-dasharray="2 1.200"/><path d="M3.500 11.500l5-6.500c1-.8 2-1 3-1h5.500v7.500z" fill="#fff" stroke="#000" stroke-width="1.3" /></svg><svg class="ic" style="left:883.5px;top:56px" width="20" height="20" viewBox="0 0 20 20"><rect x="2" y="13.600" width="16" height="3.200" fill="#000"/><path d="M3.500 15.200h13" fill="none" stroke="#f0e840" stroke-width="1.2" stroke-dasharray="2 1.200"/><path d="M3.500 11.500l6-7h7.500v7z" fill="#fff" stroke="#000" stroke-width="1.3" /><path d="M11 8h3M12.500 6.500v3" fill="none" stroke="#2850c0" stroke-width="1.2" /></svg><svg class="ic" style="left:905.5px;top:56px" width="20" height="20" viewBox="0 0 20 20"><rect x="2" y="13.600" width="16" height="3.200" fill="#000"/><path d="M3.500 15.200h13" fill="none" stroke="#f0e840" stroke-width="1.2" stroke-dasharray="2 1.200"/><path d="M5 7.500c2-3.500 9-3.500 12 0c-3 3.500-10 3.500-12 0z" fill="#fff" stroke="#000" stroke-width="1.2" /><path d="M11 3.500v8" fill="none" stroke="#000" stroke-width="1.2" /><path d="M2.500 11.500c0-3 1-5 3.500-6" fill="none" stroke="#000" stroke-width="1.1" /><path d="M2 9l.6 2.800l2.400-1.300" fill="none" stroke="#000" stroke-width="1" /></svg><svg class="ic" style="left:927px;top:56px" width="20" height="20" viewBox="0 0 20 20"><path d="M6 3.500h10.500c-1.200 1-1.200 2-1.200 3v8c0 1.500-1.200 2.500-2.500 2.500h-9c1.500-1 1.700-2 1.700-3v-8c0-1 .2-2 .5-2.500z" fill="#fff" stroke="#000" stroke-width="1.1" /><path d="M8 6.500h5.500M8 8.500h5.500M8 10.500h5.500M8 12.500h5.500" fill="none" stroke="#000" stroke-width="0.9" /></svg><div class="abs gt" style="left:304px;top:56px;width:55px;height:20px;background:#fff;font-size:12px;line-height:19px;padding-left:3px;white-space:nowrap;overflow:hidden">细实线层</div><div class="abs" style="left:359px;top:57px;width:14px;height:18px;background:#d5e4fa;border:1px solid #7ba4dc"><div style="position:absolute;left:2px;top:7px;border:4px solid transparent;border-top:4px solid #000;border-bottom:0"></div></div><div class="abs gt" style="left:405px;top:56px;width:155px;height:20px;background:#fff"><div style="position:absolute;left:3px;top:9px;width:63px;height:1px;background:#d03030"></div><span style="position:absolute;left:82px;top:4px;font-family:'Liberation Mono',monospace;font-size:10px">BYLAYER</span></div><div class="abs" style="left:560px;top:57px;width:15px;height:18px;background:#d5e4fa;border:1px solid #7ba4dc"><div style="position:absolute;left:3px;top:7px;border:4px solid transparent;border-top:4px solid #000;border-bottom:0"></div></div><div class="grip" style="left:3px;top:83px;height:22px"></div><div class="grip" style="left:165px;top:83px;height:22px"></div><div class="grip" style="left:334px;top:83px;height:22px"></div><div class="grip" style="left:576px;top:83px;height:22px"></div><div class="vl" style="left:161px;top:80px;height:27px;width:1px;background:#5f8acc"></div><div class="vl" style="left:162px;top:80px;height:27px;width:1px;background:#a8c2ea"></div><div class="vl" style="left:329px;top:80px;height:27px;width:1px;background:#5f8acc"></div><div class="vl" style="left:330px;top:80px;height:27px;width:1px;background:#a8c2ea"></div><div class="vl" style="left:571px;top:80px;height:27px;width:1px;background:#5f8acc"></div><div class="vl" style="left:572px;top:80px;height:27px;width:1px;background:#a8c2ea"></div><div class="vl" style="left:769px;top:80px;height:27px;width:1px;background:#5f8acc"></div><div class="vl" style="left:770px;top:80px;height:27px;width:1px;background:#a8c2ea"></div><div class="vl" style="left:36px;top:83px;height:22px;width:2px;background:#7ba4dc"></div><div class="vl" style="left:88px;top:83px;height:22px;width:2px;background:#7ba4dc"></div><div class="vl" style="left:388px;top:83px;height:22px;width:2px;background:#7ba4dc"></div><div class="vl" style="left:630px;top:83px;height:22px;width:2px;background:#7ba4dc"></div><div class="abs" style="left:657px;top:82px;width:22px;height:22px;border:1px solid #6f9bd8;background:#c4d8f4"></div><svg class="ic" style="left:11px;top:83px" width="20" height="20" viewBox="0 0 20 20"><rect x="2.700" y="3.700" width="15" height="12.500" fill="#fff" stroke="#000" stroke-width="1.800"/><path d="M5 10h10.500M10.200 5.500v9" fill="none" stroke="#000" stroke-width="1.3" /><path d="M4.300 10l2.500-2.200v4.400zM16.200 10l-2.500-2.200v4.400zM10.200 4.800l-2.200 2.500h4.400zM10.200 15.200l-2.200-2.500h4.400z" fill="#000" stroke="#000" stroke-width="0.2" /></svg><svg class="ic" style="left:40.3px;top:83px" width="20" height="20" viewBox="0 0 20 20"><rect x="3" y="3.500" width="15" height="12.500" fill="#fff" stroke="#000" stroke-width="1.500"/><path d="M5.500 8v-2h3v-1h4v1h3v2h1v3.500h-1v2.500h-3v1h-4v-1h-3v-2.500h-1v-3.500z" fill="#fff" stroke="#000" stroke-width="1.2" /><path d="M15.500 19.500h4v-4z" fill="#8090a0" stroke="none" stroke-width="0" /></svg><svg class="ic" style="left:64px;top:83px" width="20" height="20" viewBox="0 0 20 20"><path d="M2.500 7.500h14.500M2.500 10.500h14.500M2.500 14h14.500M15 3v12M17 3v12" fill="none" stroke="#909090" stroke-width="1" /><path d="M6 5.500h8v2.500h-1l-.5-1.300h-1.300v7.300l1.300.5v.8h-5v-.8l1.300-.5v-7.300h-1.300l-.5 1.300h-1z" fill="#000" stroke="#000" stroke-width="0.3" /><path d="M15.500 19.500h4v-4z" fill="#8090a0" stroke="none" stroke-width="0" /></svg><svg class="ic" style="left:93px;top:83px" width="20" height="20" viewBox="0 0 20 20"><path d="M6 4.500l1.500-1.500v5.500M6 8.500h3" fill="none" stroke="#2040b0" stroke-width="1.1" /><path d="M12 4c.5-1.300 3-1.300 3 .3c0 1.200-3 2.500-3 4.200h3.300" fill="none" stroke="#2040b0" stroke-width="1.1" /><path d="M3 16.500l3-5.500h4M9.500 16.500l3-5.500h4" fill="none" stroke="#000" stroke-width="1.5" /><circle cx="3" cy="16.300" r="1.100" fill="#000"/><circle cx="9.500" cy="16.300" r="1.100" fill="#000"/><path d="M15.500 19.500h4v-4z" fill="#8090a0" stroke="none" stroke-width="0" /></svg><svg class="ic" style="left:115.3px;top:83px" width="20" height="20" viewBox="0 0 20 20"><path d="M2.500 4.500h15v11.500h-15zM2.500 7.500h15M2.500 10.500h15M2.500 13.500h15M6 4.500v11.500M14 4.500v11.500" fill="none" stroke="#a8a8a8" stroke-width="1" /><path d="M5.500 5.500h9v2.800h-1l-.6-1.500h-1.500v7.300l1.400.5v.9h-5.600v-.9l1.400-.5v-7.300h-1.500l-.6 1.500h-1z" fill="#000" stroke="#000" stroke-width="0.3" /><path d="M15.500 19.500h4v-4z" fill="#8090a0" stroke="none" stroke-width="0" /></svg><svg class="ic" style="left:137px;top:83px" width="20" height="20" viewBox="0 0 20 20"><rect x="2.500" y="3.500" width="14.500" height="12.500" fill="#181818"/><path d="M3.500 9.500h12.500M8 9.500v6" fill="none" stroke="#e8e8e8" stroke-width="1" /><path d="M4 8.500l3-4h2l-1.500 2h5l3-3" fill="none" stroke="#f0e030" stroke-width="1.8" /><rect x="3.500" y="11" width="4" height="4" fill="#f0e030"/><path d="M11.500 11.500a3 1.300 0 0 1 6 0v5a3 1.300 0 0 1-6 0z" fill="#2c5cc0" stroke="#103080" stroke-width=".6"/><ellipse cx="14.500" cy="11.500" rx="3" ry="1.300" fill="#6c9cec"/><path d="M15.500 19.500h4v-4z" fill="#8090a0" stroke="none" stroke-width="0" /></svg><svg class="ic" style="left:172.5px;top:83px" width="20" height="20" viewBox="0 0 20 20"><path d="M4 13h9.500a4.200 4.200 0 0 0 0-8.400" fill="none" stroke="#203868" stroke-width="1.4" /><circle cx="4" cy="13" r="1.700" fill="#3890a8"/><circle cx="13.500" cy="13" r="1.700" fill="#3890a8"/><circle cx="13" cy="4.600" r="1.700" fill="#3890a8"/></svg><svg class="ic" style="left:196px;top:83px" width="20" height="20" viewBox="0 0 20 20"><path d="M3.500 9v-1.500c0-3 3.800-3 3.800 0v4.500c0 3.500 4.400 3.500 4.400 0v-4.500c0-3 3.800-3 3.800 0v1.500" fill="none" stroke="#000" stroke-width="1.1" /></svg><svg class="ic" style="left:217.5px;top:83px" width="20" height="20" viewBox="0 0 20 20"><path d="M2.500 16.500l6-5l-2-.5l7-5l-2-.5l6-4" fill="none" stroke="#101850" stroke-width="1.4" /></svg><svg class="ic" style="left:238.5px;top:83px" width="20" height="20" viewBox="0 0 20 20"><path d="M4 16.500l11-11.500" fill="none" stroke="#000" stroke-width="1.3" /><path d="M15.500 4.500l-5.800 2.500l3.300 3.300z" fill="#000" stroke="#000" stroke-width="0.3" /></svg><svg class="ic" style="left:260px;top:83px" width="20" height="20" viewBox="0 0 20 20"><path d="M5 7c-1.500-1.500-.5-4 2-3.500c1 .3 1.500 1.200 1.500 2.200c1-.2 2 .2 2.300 1.200c.5-2 3-2.700 4.500-1.200c1.500 1.600.6 4-1.500 4.300c1.800.5 3 2 2.500 3.800c-.5 1.500-2.500 2-3.800 1" fill="none" stroke="#000" stroke-width="1.4" /><ellipse cx="6.500" cy="14.500" rx="3.700" ry="2.500" fill="#fff" stroke="#000" stroke-width="1.400"/></svg><svg class="ic" style="left:282.5px;top:83px" width="20" height="20" viewBox="0 0 20 20"><circle cx="10" cy="7.500" r="4.800" fill="#d8ecf8" stroke="#384858" stroke-width="1.400"/><path d="M3.500 17.500v-5.500c3 1.500 3.500 2 6.500 2s3.500-.5 6.500-2v5.500" fill="none" stroke="#000" stroke-width="1.3" /></svg><svg class="ic" style="left:305px;top:83px" width="20" height="20" viewBox="0 0 20 20"><path d="M7.500 3.500h5.500v13h-5.500z" fill="#fff" stroke="#000" stroke-width="1.4" /><path d="M3.500 8h13.500v4h-13.500z" fill="none" stroke="#000" stroke-width="1.4" /><path d="M1.500 10h17.500" fill="none" stroke="#000" stroke-width="1" /></svg><svg class="ic" style="left:340px;top:83px" width="20" height="20" viewBox="0 0 20 20"><path d="M4 4v12M16.500 4v12M5 10h10.500" fill="none" stroke="#000" stroke-width="1.7" /><path d="M4.500 10l4-3v6zM16 10l-4-3v6z" fill="#000" stroke="#000" stroke-width="0.2" /></svg><svg class="ic" style="left:362.5px;top:83px" width="20" height="20" viewBox="0 0 20 20"><path d="M7.500 2.500v14.500h10.500" fill="none" stroke="#203050" stroke-width="1.3" /><path d="M7.500 17c1-6 4-10 8-12M7.500 12c2-2.500 5-3 9-3" fill="none" stroke="#3c78d8" stroke-width="1.2" /><path d="M2.500 7l2.500 3M5 7l-2.500 3M2.500 13.500l2.500 3M5 13.500l-2.500 3" fill="none" stroke="#203050" stroke-width="0.9" /><path d="M14 1.500l1.500 2l1.500-2M15.500 3.500v2.500" fill="none" stroke="#203050" stroke-width="0.9" /></svg><svg class="ic" style="left:392.5px;top:83px" width="20" height="20" viewBox="0 0 20 20"><path d="M2.500 3.500c5 0 7 3 7 6.500s-2 6.500-7 6.500M5.500 4v12M2 10h9" fill="none" stroke="#000" stroke-width="1.3" /><path d="M11 13l3-7.500l3 7.500zM11 13h7.500" fill="none" stroke="#000" stroke-width="1.1" /><path d="M9.500 10l2 1.500" fill="none" stroke="#000" stroke-width="1" /></svg><svg class="ic" style="left:416.5px;top:83px" width="20" height="20" viewBox="0 0 20 20"><path d="M9 7.500l2.500-5l2.500 5zM7 7.500h9" fill="none" stroke="#000" stroke-width="1.1" /><path d="M10 10.500h3c1.500 0 1.500 2.800 0 2.800h-3v-2.800v6h3.200c1.800 0 1.800-3.200 0-3.200" fill="none" stroke="#000" stroke-width="1.2" /><path d="M3 11h6" fill="none" stroke="#2050c0" stroke-width="1.5" /><path d="M2.500 11l3-2.500v5z" fill="#2050c0" stroke="#2050c0" stroke-width="0.2" /></svg><svg class="ic" style="left:437.5px;top:83px" width="20" height="20" viewBox="0 0 20 20"><path d="M4 5.500l5.500 11.500l6-14" fill="none" stroke="#000" stroke-width="1.4" /><path d="M5.500 9h8.500" fill="none" stroke="#000" stroke-width="1.2" /><path d="M8 5.500l2-4l2 4zM7 5.500h6" fill="none" stroke="#000" stroke-width="1" /></svg><svg class="ic" style="left:460px;top:83px" width="20" height="20" viewBox="0 0 20 20"><circle cx="10" cy="7" r="4.800" fill="#fff" stroke="#000" stroke-width="1.300"/><path d="M8 9.500l2-5.500l2 5.500M8.700 8h2.600" fill="none" stroke="#4060a0" stroke-width="1.1" /><path d="M10 12v4.500M5 17h10M6.500 13.500h7" fill="none" stroke="#000" stroke-width="1.3" /></svg><svg class="ic" style="left:480.5px;top:83px" width="20" height="20" viewBox="0 0 20 20"><rect x="6.500" y="2.500" width="11" height="9.500" fill="#fff" stroke="#000" stroke-width="1.300"/><path d="M9 10.500l3-6.500l3 6.500M10 8.500h4" fill="none" stroke="#000" stroke-width="1.1" /><path d="M4 2.500v13" fill="none" stroke="#000" stroke-width="1.6" /><path d="M4 17.500l-3-4h6z" fill="#000" stroke="#000" stroke-width="0.2" /><path d="M4 14h13.500" fill="none" stroke="#000" stroke-width="1.2" /></svg><svg class="ic" style="left:502px;top:83px" width="20" height="20" viewBox="0 0 20 20"><path d="M3.500 5v11.500h12.500M6.500 8v5.500h6" fill="none" stroke="#000" stroke-width="1.5" /><path d="M15.500 4l-7 7" fill="none" stroke="#000" stroke-width="1.2" /><path d="M7.500 12l1-3.500l2.500 2.500z" fill="#000" stroke="#000" stroke-width="0.2" /><path d="M14 2.500l3 .5M17 3l-.5 3" fill="none" stroke="#000" stroke-width="1" /></svg><svg class="ic" style="left:524px;top:83px" width="20" height="20" viewBox="0 0 20 20"><path d="M2.500 6h5M2.500 13.500h5" fill="none" stroke="#000" stroke-width="1.3" stroke-dasharray="2 1.300"/><path d="M9.500 6l-2.500-2v4zM9.500 13.500l-2.500-2v4z" fill="#000" stroke="#000" stroke-width="0.2" /><path d="M11.500 8.500l2.500-6l2.500 6M12.500 6.500h3M11.500 17l2.500-6l2.500 6M12.500 15h3" fill="none" stroke="#000" stroke-width="1.1" /></svg><svg class="ic" style="left:547.5px;top:83px" width="20" height="20" viewBox="0 0 20 20"><path d="M2.500 8.500h10v7h-10z" fill="#fff" stroke="#000" stroke-width="1.3" /><path d="M5 8.500v-2.500h9v6.500h-1.500" fill="none" stroke="#000" stroke-width="1.1" /><circle cx="13" cy="8" r="3.800" fill="#d8e8f4" fill-opacity=".8" stroke="#708090" stroke-width="1.300"/><path d="M15.500 11l3 4" fill="none" stroke="#506070" stroke-width="2" /></svg><svg class="ic" style="left:583.5px;top:83px" width="20" height="20" viewBox="0 0 20 20"><circle cx="8.500" cy="7.500" r="5" fill="#fff" stroke="#283848" stroke-width="1.500"/><path d="M4 11.500v5h7v-4.500" fill="none" stroke="#000" stroke-width="1.2" /><path d="M11.500 11l5 5.500" fill="none" stroke="#283038" stroke-width="2" /><path d="M16.500 3l-6 7" fill="none" stroke="#e05040" stroke-width="2.2" /><path d="M10 10.500l-.8 1.800l1.800-.8z" fill="#000" stroke="#000" stroke-width="0.2" /></svg><svg class="ic" style="left:605px;top:83px" width="20" height="20" viewBox="0 0 20 20"><rect x="2" y="13" width="15" height="3.200" fill="#000"/><path d="M3.500 14.600h12" fill="none" stroke="#f0e840" stroke-width="1.2" stroke-dasharray="2 1.200"/><path d="M5.500 8h9" fill="none" stroke="#2850c0" stroke-width="1.3" stroke-dasharray="1.500 1.300"/><path d="M2.500 8l3-1.800v3.600zM17 6v4" fill="#2850c0" stroke="#2850c0" stroke-width="0.6" /><path d="M16 19.500h3.500v-3.500z" fill="#8090a0" stroke="none" stroke-width="0" /></svg><svg class="ic" style="left:634.5px;top:83px" width="20" height="20" viewBox="0 0 20 20"><path d="M2.500 11.500c0 5 5 5 6.500 2" fill="none" stroke="#000" stroke-width="1.3" /><path d="M8.500 17h9.500" fill="none" stroke="#a0a0a0" stroke-width="1" /><path d="M9 13.500l7-10l2.500 1.800l-7 10z" fill="#f0a030" stroke="#c07010" stroke-width="0.6" /><path d="M9 13.500l-.5 2.800l3-1z" fill="#f0d8b0" stroke="#806020" stroke-width="0.5" /><path d="M16 3.500l2.500 1.800" fill="none" stroke="#e04040" stroke-width="1.5" /></svg><svg class="ic" style="left:657.5px;top:83px" width="20" height="20" viewBox="0 0 20 20"><path d="M5.500 17c-2-2.500-3.500-5-2.500-5.800c.8-.5 1.700.3 2.500 1.500l-2-5.500c-.3-1.200 1-1.700 1.500-.6l1.700 4l-1.200-5.300c-.2-1.200 1.200-1.500 1.600-.4l1.500 5.200l-.3-5c0-1.200 1.500-1.200 1.700 0l.8 5.500l.7-3.500c.3-1 1.500-.8 1.500.3c0 3-.3 6.500-1.500 9.600z" fill="#fff" stroke="#000" stroke-width="1" /><path d="M15.500 2v6M12.500 5h6" fill="none" stroke="#2c5cc0" stroke-width="1.2" /><path d="M15.500 1l1.300 1.800h-2.600zM15.500 9l1.300-1.800h-2.600zM11.500 5l1.800-1.300v2.600zM19.500 5l-1.800-1.300v2.600z" fill="#2c5cc0" stroke="none" stroke-width="0" /></svg><svg class="ic" style="left:679.5px;top:83px" width="20" height="20" viewBox="0 0 20 20"><circle cx="7.500" cy="8" r="5" fill="#dcecf8" stroke="#788898" stroke-width="1.600"/><path d="M11 12l5.500 5.500" fill="none" stroke="#384450" stroke-width="2.4" /><path d="M13 5h6M16 2v6M13 10.500h6" fill="none" stroke="#102060" stroke-width="1.6" /></svg><svg class="ic" style="left:701px;top:83px" width="20" height="20" viewBox="0 0 20 20"><circle cx="8" cy="8" r="5.800" fill="#d4e4f2" stroke="#8c98a8" stroke-width="1.800"/><circle cx="8" cy="8" r="4.600" fill="#e8f0f8" stroke="#506070" stroke-width=".6"/><path d="M4.500 5.500h7.500v5.500h-7.500zM3 4.500h3M10 4.500h3v2M3 12v-1" fill="none" stroke="#101828" stroke-width="1.2" /><path d="M12.300 12.300l5.200 5.200" fill="none" stroke="#384450" stroke-width="2.4" /></svg><svg class="ic" style="left:723.5px;top:83px" width="20" height="20" viewBox="0 0 20 20"><circle cx="8" cy="8" r="5.800" fill="#d4e4f2" stroke="#8c98a8" stroke-width="1.800"/><circle cx="8" cy="8" r="4.600" fill="#e8f0f8" stroke="#506070" stroke-width=".6"/><path d="M5.500 4.500h3.500l2 2v5.500h-5.500z" fill="#fff" stroke="#506070" stroke-width="1" /><path d="M12.300 12.300l5.200 5.200" fill="none" stroke="#384450" stroke-width="2.4" /></svg><svg class="ic" style="left:744.5px;top:83px" width="20" height="20" viewBox="0 0 20 20"><circle cx="8" cy="8" r="5.800" fill="#d4e4f2" stroke="#8c98a8" stroke-width="1.800"/><circle cx="8" cy="8" r="4.600" fill="#e8f0f8" stroke="#506070" stroke-width=".6"/><path d="M5 4.500v7l6-3z" fill="#000" stroke="#000" stroke-width="0.3" /><path d="M5.500 11.500l5-7" fill="none" stroke="#000" stroke-width="1.8" /><path d="M10 4c2.500 0 4 1.500 4 4" fill="none" stroke="#000" stroke-width="1.6" /><path d="M12.300 12.300l5.200 5.200" fill="none" stroke="#384450" stroke-width="2.4" /></svg><div class="gripH" style="left:2px;top:113px;width:21px"></div><div class="gripH" style="left:30px;top:113px;width:21px"></div><div class="vl" style="left:25px;top:109px;height:440px;width:2px;background:#8fb2e4"></div><div class="hl" style="left:0px;top:549px;width:53px;height:1px;background:#6a88b8"></div><svg class="ic" style="left:1px;top:121px" width="20" height="20" viewBox="0 0 20 20"><path d="M4 16l12-12" fill="none" stroke="#000" stroke-width="1.25" /><rect x="2.800" y="15" width="2.200" height="2.200" fill="#3890b0"/><rect x="15" y="2.800" width="2.200" height="2.200" fill="#3890b0"/></svg><svg class="ic" style="left:1px;top:143px" width="20" height="20" viewBox="0 0 20 20"><path d="M2.500 13l11.500-10M5.500 17l12-10.500" fill="none" stroke="#000" stroke-width="1.4" /></svg><svg class="ic" style="left:1px;top:165px" width="20" height="20" viewBox="0 0 20 20"><circle cx="10.300" cy="10" r="7" fill="#fff" stroke="#000" stroke-width="1.250"/><path d="M8 10h4.600M10.300 7.700v4.600" fill="none" stroke="#1840a0" stroke-width="1.2" /></svg><svg class="ic" style="left:1px;top:187.5px" width="20" height="20" viewBox="0 0 20 20"><path d="M3.500 17c0-8 5-13 13-13.500" fill="none" stroke="#286c90" stroke-width="1.5" /><rect x="2.300" y="16" width="2.400" height="2.400" fill="#3890b0"/><rect x="15.500" y="2.300" width="2.400" height="2.400" fill="#3890b0"/><rect x="6" y="7" width="2.200" height="2.200" fill="#3890b0"/></svg><svg class="ic" style="left:1px;top:209px" width="20" height="20" viewBox="0 0 20 20"><path d="M3 16c1-6 4-7 6.500-4.500s6 1.500 7-7" fill="none" stroke="#101828" stroke-width="1.4" /></svg><svg class="ic" style="left:1px;top:229.5px" width="20" height="20" viewBox="0 0 20 20"><rect x="7.500" y="7.500" width="6" height="6" fill="#2464dc"/><rect x="7.500" y="7.500" width="3" height="3" fill="#4c8cf0"/><path d="M6.500 6.500l1 1M14.500 6.500l-1 1M6.500 14.500l1-1M14.500 14.500l-1-1" fill="none" stroke="#a8c0e8" stroke-width="1" /></svg><svg class="ic" style="left:1px;top:252px" width="20" height="20" viewBox="0 0 20 20"><ellipse cx="10" cy="10" rx="7.500" ry="5" fill="#fff" stroke="#000" stroke-width="1.400"/><rect x="9" y="8.500" width="2.500" height="2.500" fill="#4c8cd8"/></svg><svg class="ic" style="left:1px;top:274.5px" width="20" height="20" viewBox="0 0 20 20"><rect x="3.500" y="5.500" width="13.500" height="8" fill="#fff" stroke="#000" stroke-width="1.400"/><rect x="9" y="8.500" width="2.500" height="2.500" fill="#4c8cd8"/></svg><svg class="ic" style="left:1px;top:297px" width="20" height="20" viewBox="0 0 20 20"><path d="M6.500 4h7l3.500 4v4.500l-3.500 4h-7l-3.500-4v-4.500z" fill="#fff" stroke="#283848" stroke-width="1.4" /><rect x="8.800" y="8.800" width="2.500" height="2.500" fill="#4c8cd8"/></svg><svg class="ic" style="left:1px;top:319px" width="20" height="20" viewBox="0 0 20 20"><path d="M5 15.500l9-9a2.200 2.200 0 0 0-3-3l-9 9" fill="none" stroke="#000" stroke-width="1.2" /><path d="M3 17.500l14-14" fill="none" stroke="#000" stroke-width="1.1" /><path d="M5.500 16l9.500-9.500c1.500-1.500-1.500-4.500-3-3l-9.500 9.500" fill="none" stroke="#000" stroke-width="1" /></svg><svg class="ic" style="left:1px;top:341px" width="20" height="20" viewBox="0 0 20 20"><path d="M3.500 4.500h13v12.500M3.500 8.500h9v8.500" fill="none" stroke="#283038" stroke-width="1.4" /></svg><svg class="ic" style="left:1px;top:362.5px" width="20" height="20" viewBox="0 0 20 20"><path d="M4.500 3.500v13.500h13" fill="none" stroke="#000" stroke-width="1.4" /><path d="M4.500 9c4 0 7.500 3.500 8 8" fill="none" stroke="#000" stroke-width="1.1" /><path d="M4.500 2.500l-1.800 2.500h3.600zM18.500 17l-2.500-1.800v3.600z" fill="#000" stroke="#000" stroke-width="0.2" /></svg><svg class="ic" style="left:1px;top:385px" width="20" height="20" viewBox="0 0 20 20"><rect x="5.500" y="5.500" width="9.500" height="9.500" fill="#2c6c8c"/><path d="M5.500 9l3.500-3.500M5.500 12.500l7-7M6.500 15l8.500-8.500M10 15l5-5" fill="none" stroke="#d0e8f4" stroke-width="1" /><path d="M2.500 5.500h15.500M2.500 15h15.500M5.500 2.500v15.500M15 2.500v15.500" fill="none" stroke="#1c4c6c" stroke-width="1.3" /></svg><svg class="ic" style="left:1px;top:406.5px" width="20" height="20" viewBox="0 0 20 20"><path d="M3.500 5.500h9l4.500 4.500v6.500h-13.500z" fill="#fff" stroke="#8090a0" stroke-width="1.3" /><ellipse cx="9.500" cy="11.500" rx="3" ry="2" fill="none" stroke="#708090" stroke-width="1.200"/></svg><svg class="ic" style="left:1px;top:430px" width="20" height="20" viewBox="0 0 20 20"><path d="M3 17h5v-1l-1.700-.5l1-3h5.400l1 3l-1.700.5v1h6.500v-1l-1.500-.5l-5-13.500h-2l-5 13.500l-1.500.5zM7.800 11l2.200-6l2.200 6z" fill="#1c1c70" stroke="#1c1c70" stroke-width="0.3" fill-rule="evenodd"/></svg><div class="hl" style="left:3px;top:454px;width:19px;height:1px;background:#7ba4dc"></div><svg class="ic" style="left:1px;top:459.5px" width="20" height="20" viewBox="0 0 20 20"><rect x="3.500" y="3.500" width="10" height="8" fill="#fff" stroke="#000" stroke-width="1.300"/><circle cx="13" cy="13" r="4" fill="#fff" stroke="#000" stroke-width="1.300"/><path d="M3.500 14l2 1.800v-3.600z" fill="#2c5cc0" stroke="none" stroke-width="0" /><path d="M15.500 18.500h3v-3z" fill="#8090a0" stroke="none" stroke-width="0" /></svg><svg class="ic" style="left:1px;top:481.5px" width="20" height="20" viewBox="0 0 20 20"><rect x="3" y="12.500" width="13.500" height="5" rx="1.500" fill="#fff" stroke="#000" stroke-width="1.300"/><rect x="6" y="14" width="7" height="2.500" fill="#5c8cd0"/><path d="M8 14v2.500M10.500 14v2.500" fill="none" stroke="#fff" stroke-width="0.6" /><path d="M4 12v-5.500h4" fill="none" stroke="#000" stroke-width="1.4" /><path d="M9.500 6.500l-2.800-2.200v4.400z" fill="#000" stroke="#000" stroke-width="0.2" /><path d="M10.500 3h7v3.500h-2v4.500h-3v-4.500h-2z" fill="#fff" stroke="#000" stroke-width="1.2" /><path d="M15.500 18.500h3v-3z" fill="#8090a0" stroke="none" stroke-width="0" /></svg><svg class="ic" style="left:1px;top:503px" width="20" height="20" viewBox="0 0 20 20"><rect x="3" y="12.500" width="13.500" height="5" rx="1.500" fill="#fff" stroke="#000" stroke-width="1.300"/><rect x="6" y="14" width="7" height="2.500" fill="#5c8cd0"/><path d="M8 14v2.500M10.500 14v2.500" fill="none" stroke="#fff" stroke-width="0.6" /><path d="M4 12v-5.500h4" fill="none" stroke="#000" stroke-width="1.4" /><path d="M9.500 6.500l-2.800-2.200v4.400z" fill="#000" stroke="#000" stroke-width="0.2" /><path d="M10.500 11l3-8l3 8M11.500 8.500h4" fill="none" stroke="#000" stroke-width="1.3" /></svg><svg class="ic" style="left:1px;top:524px" width="20" height="20" viewBox="0 0 20 20"><rect x="3" y="12.500" width="13.500" height="5" rx="1.500" fill="#fff" stroke="#000" stroke-width="1.300"/><rect x="6" y="14" width="7" height="2.500" fill="#5c8cd0"/><path d="M8 14v2.500M10.500 14v2.500" fill="none" stroke="#fff" stroke-width="0.6" /><path d="M4 12v-5.500h4" fill="none" stroke="#000" stroke-width="1.4" /><path d="M9.500 6.500l-2.800-2.200v4.400z" fill="#000" stroke="#000" stroke-width="0.2" /><path d="M16 2l-5 5h2.500l-2 4.500l5.500-5.500h-2.500z" fill="#f4e430" stroke="#c0a810" stroke-width="0.5" /></svg><svg class="ic" style="left:28.5px;top:121.5px" width="20" height="20" viewBox="0 0 20 20"><path d="M2.500 17.500h15.500" fill="none" stroke="#000" stroke-width="1.1" /><path d="M8.500 12l7-8.500l2.500 2l-7 8.500z" fill="#f0a838" stroke="#b87010" stroke-width="0.6" /><path d="M8.500 12l-3 3c-.8 1 .8 2.500 2 1.700l3.500-2.700z" fill="#f07868" stroke="#b04030" stroke-width="0.6" /><path d="M15.500 3.500l2.500 2" fill="none" stroke="#705030" stroke-width="1.3" /></svg><svg class="ic" style="left:28.5px;top:143.5px" width="20" height="20" viewBox="0 0 20 20"><path d="M10 3v14M3 10h14" fill="none" stroke="#6c8494" stroke-width="2.2" /><path d="M10 1.500l-3 3.500h6zM10 18.500l-3-3.500h6zM1.500 10l3.500-3v6zM18.500 10l-3.500-3v6z" fill="#6c8494" stroke="none" stroke-width="0" /></svg><svg class="ic" style="left:28.5px;top:165.5px" width="20" height="20" viewBox="0 0 20 20"><path d="M3 3.500h10.500l2 2v6h-12.500z" fill="#e4ecf4" stroke="#5c7490" stroke-width="1.2" /><path d="M5 5.500h8M5 7.500h8" fill="none" stroke="#8ca0b8" stroke-width="1" /><rect x="3.500" y="8" width="7" height="6.500" fill="#7c94ac" stroke="#4c6480" stroke-width="1"/><rect x="8.500" y="10.500" width="9" height="7" fill="#b8c8d8" stroke="#5c7490" stroke-width="1.200"/></svg><svg class="ic" style="left:28.5px;top:187.5px" width="20" height="20" viewBox="0 0 20 20"><path d="M10 2v16" fill="none" stroke="#404850" stroke-width="1" /><path d="M8 4.500v11.500h-5.500z" fill="#d0d8e0" stroke="#000" stroke-width="1.2" /><path d="M12 4.500v11.500h5.500z" fill="#98a4b0" stroke="#000" stroke-width="1.2" /></svg><svg class="ic" style="left:28.5px;top:210px" width="20" height="20" viewBox="0 0 20 20"><path d="M9 10.500h-6.500l4.500-7v7" fill="none" stroke="#000" stroke-width="1.2" /><path d="M11 10.500h7l-5-5.500" fill="#fff" stroke="#000" stroke-width="1.1" /><path d="M9 3.500c3-1.500 6 0 7 2.500" fill="none" stroke="#000" stroke-width="1.1" stroke-dasharray="1.500 1"/><path d="M8 2l2.800 1l-2 2z" fill="#000" stroke="#000" stroke-width="0.2" /><circle cx="9.500" cy="14.500" r="3" fill="#fff" stroke="#000" stroke-width="1.200"/><circle cx="9.500" cy="14.500" r="1" fill="#000"/></svg><svg class="ic" style="left:28.5px;top:231.5px" width="20" height="20" viewBox="0 0 20 20"><path d="M3.500 3.500h5.500v5h-5.500zM11.500 3.500h5.500v5h-5.500zM3.500 11.500h5.500v5h-5.500zM11.500 11.500h5.500v5h-5.500z" fill="#fff" stroke="#000" stroke-width="1.5" /></svg><svg class="ic" style="left:28.5px;top:255px" width="20" height="20" viewBox="0 0 20 20"><rect x="6.500" y="2.500" width="11" height="9.500" fill="#fff" stroke="#000" stroke-width="1.300"/><rect x="3" y="9" width="7" height="6.500" fill="#fff" stroke="#000" stroke-width="1.300"/><path d="M12 5.500h2.500M13.500 7.500l2-2" fill="none" stroke="#606870" stroke-width="1" /><path d="M11 13.500l3-3v3z" fill="#000" stroke="#000" stroke-width="0.2" /></svg><svg class="ic" style="left:28.5px;top:274.5px" width="20" height="20" viewBox="0 0 20 20"><path d="M3 6.500l14.500-2.500" fill="none" stroke="#506070" stroke-width="1" /><path d="M7.500 2.500l3.200 9M13 2.500l-3.200 9" fill="none" stroke="#000" stroke-width="1.4" /><circle cx="7.500" cy="14.500" r="2" fill="none" stroke="#2434b0" stroke-width="1.400"/><circle cx="13" cy="14.500" r="2" fill="none" stroke="#2434b0" stroke-width="1.400"/><path d="M10.800 11l-2 1.700M9.700 11l2 1.700" fill="none" stroke="#2434b0" stroke-width="1.2" /></svg><svg class="ic" style="left:28.5px;top:297.5px" width="20" height="20" viewBox="0 0 20 20"><path d="M4 17.500v-5c0-5.500 3.500-9 9-9h5" fill="none" stroke="#182030" stroke-width="1.6" /><path d="M4 12.500v-9h9" fill="none" stroke="#2c4c9c" stroke-width="1.2" stroke-dasharray="1.200 1.200"/><path d="M6 10.500c1-3 3-5 6-5.500" fill="none" stroke="#a0b4d0" stroke-width="2" /></svg><svg class="ic" style="left:28.5px;top:319.5px" width="20" height="20" viewBox="0 0 20 20"><path d="M2.500 12h6.500" fill="none" stroke="#000" stroke-width="2.4" /><path d="M10 12h2.500" fill="none" stroke="#2c5cc0" stroke-width="1.5" /><path d="M12.500 17.500l4.500-14.500" fill="none" stroke="#000" stroke-width="1.5" /></svg><svg class="ic" style="left:28.5px;top:342px" width="20" height="20" viewBox="0 0 20 20"><path d="M4 16l11.500-11.500" fill="none" stroke="#182c50" stroke-width="1.5" stroke-dasharray="3.500 1.200"/><path d="M3 17l1.500-3.500l2 2z" fill="#3890b0" stroke="#3890b0" stroke-width="0.3" /><path d="M15 4l2-1.500" fill="none" stroke="#3890b0" stroke-width="1.5" /></svg><svg class="ic" style="left:28.5px;top:361.5px" width="20" height="20" viewBox="0 0 20 20"><path d="M3.500 6v10h13.500v-10M3.500 8h3.500M13.500 8h3.500" fill="none" stroke="#000" stroke-width="1.5" /><rect x="4.500" y="9" width="11.500" height="6" fill="#fff"/></svg><svg class="ic" style="left:28.5px;top:385.5px" width="20" height="20" viewBox="0 0 20 20"><rect x="4" y="11" width="2.600" height="2.600" fill="#f0a020"/><rect x="7" y="14" width="2.600" height="2.600" fill="#e03020"/><rect x="5" y="15.5" width="2.600" height="2.600" fill="#2850c0"/><rect x="9" y="11" width="2.600" height="2.600" fill="#f0c020"/><rect x="8" y="8.5" width="2.600" height="2.600" fill="#e06020"/><rect x="3.5" y="8" width="2.600" height="2.600" fill="#2850c0"/><path d="M9 11l7-7.500" fill="none" stroke="#203880" stroke-width="1.6" /><path d="M13 2.500l1 1M16.500 6l1 1M17.500 2.500l-1 1M15 1.500v1.200M18 4.500h-1.200" fill="none" stroke="#5c84d0" stroke-width="1" /></svg><svg class="ic" style="left:28.5px;top:408px" width="20" height="20" viewBox="0 0 20 20"><path d="M5 2.500v15.500" fill="none" stroke="#283040" stroke-width="1.1" stroke-dasharray="2.200 1.400"/><path d="M15.500 2.500v15.500" fill="none" stroke="#000" stroke-width="1.8" /><path d="M7.500 10h4" fill="none" stroke="#2040c0" stroke-width="1.6" /><path d="M14 10l-3.200-2.500v5z" fill="#2040c0" stroke="none" stroke-width="0" /></svg><svg class="ic" style="left:28.5px;top:430px" width="20" height="20" viewBox="0 0 20 20"><rect x="3" y="9.500" width="6.500" height="6" rx="1" fill="#30a060" stroke="#187040" stroke-width=".8"/><rect x="11" y="2.500" width="6.500" height="6.500" fill="#5878b8" stroke="#304880" stroke-width=".8"/><path d="M12 4h4.500M12 6h4.500" fill="none" stroke="#c8d4f0" stroke-width="1" /><path d="M9 17.500l6-6" fill="none" stroke="#000" stroke-width="2" /><path d="M16.500 10l-4.500.8l3.700 3.700z" fill="#000" stroke="#000" stroke-width="0.3" /></svg><svg class="ic" style="left:28.5px;top:450px" width="20" height="20" viewBox="0 0 20 20"><path d="M5.500 3.500h11l-4 4h-11z" fill="#fff" stroke="#000" stroke-width="1.1" /><path d="M5.500 12.500h11l-4 4.500h-11z" fill="#40d8e8" stroke="#000" stroke-width="1.1" /><path d="M5 7.500l5 2.500l5-2.500" fill="none" stroke="#000" stroke-width="1.1" /><path d="M7 12.500l3-2.500l3 2.500" fill="none" stroke="#000" stroke-width="1.1" /><path d="M15.500 18.500h3v-3z" fill="#8090a0" stroke="none" stroke-width="0" /></svg><div class="hl" style="left:30px;top:476px;width:19px;height:1px;background:#7ba4dc"></div><svg class="ic" style="left:28.5px;top:480.5px" width="20" height="20" viewBox="0 0 20 20"><path d="M3 6v11M17.500 6v11M4 11.500h12.500" fill="none" stroke="#000" stroke-width="1.5" /><path d="M3.500 11.500l3-2.200v4.400zM17 11.500l-3-2.200v4.400z" fill="#000" stroke="#000" stroke-width="0.2" /><path d="M8.500 10l6.500-7l2 2l-6.500 7z" fill="#f0a060" stroke="#b06020" stroke-width="0.6" /><path d="M8.500 10l-.8 2.800l2.800-.8z" fill="#f8e0c0" stroke="#806020" stroke-width="0.4" /></svg><svg class="ic" style="left:28.5px;top:503px" width="20" height="20" viewBox="0 0 20 20"><path d="M7 2.500v7M17 2.500v7M8 6h8" fill="none" stroke="#000" stroke-width="1.5" /><path d="M7.500 6l2.800-2v4zM16.500 6l-2.800-2v4z" fill="#000" stroke="#000" stroke-width="0.2" /><path d="M2.500 12.500v5M7 12.500v5M11 12.500v5M3 15h8" fill="none" stroke="#2040c0" stroke-width="1.1" /><path d="M17 11.500v3h-3.500" fill="none" stroke="#2040c0" stroke-width="1.2" /><path d="M12.500 14.500l2-1.500v3z" fill="#2040c0" stroke="none" stroke-width="0" /></svg><svg class="ic" style="left:28.5px;top:523.5px" width="20" height="20" viewBox="0 0 20 20"><path d="M3 11l6.500-4l5 5.500l-4.500 5.500z" fill="#c8d0d8" stroke="#404850" stroke-width="1" /><path d="M4.500 12l5.500 5M6.500 10.500l5.500 5.500" fill="none" stroke="#687078" stroke-width="0.8" /><path d="M10.500 6.500l2.500-1.500l3 3.500l-1.500 2.500z" fill="#e8ecf0" stroke="#404850" stroke-width="0.8" /><path d="M13.500 5.500l3.500-3.500l1.500 1.500l-3 4z" fill="#1c2c8c" stroke="#101c60" stroke-width="0.6" /></svg><div class="hl" style="left:1126px;top:107px;width:26px;height:2px;background:#5f92d6"></div><div class="gripH" style="left:1128px;top:113px;width:22px"></div><div class="hl" style="left:1127px;top:337px;width:25px;height:2px;background:#7ba4dc"></div><svg class="ic" style="left:1129px;top:120.5px" width="20" height="20" viewBox="0 0 20 20"><path d="M2.500 6.500v-3h3l1 1h2.500v2zM12 8.500v-5.500l2.500-1.500h2.500v7zM3 11.500h5.500v6h-5.500z" fill="#fff" stroke="#000" stroke-width="1.2" /><path d="M5.500 13.500h5.500v4.500" fill="none" stroke="#000" stroke-width="1.1" /><path d="M10.500 8.500l7.500 8.500" fill="none" stroke="#e03030" stroke-width="1.3" stroke-dasharray="1.500 1"/></svg><svg class="ic" style="left:1129px;top:143px" width="20" height="20" viewBox="0 0 20 20"><path d="M3 8l7-4.500l7.500 3v6.500l-7 5l-7.500-3.500z" fill="#fff" stroke="#000" stroke-width="1.3" /><path d="M3 8l7.500 3.500l7-5M10.500 11.500v6.500" fill="none" stroke="#000" stroke-width="1.2" /><ellipse cx="10" cy="7.500" rx="3" ry="1.600" fill="#c8d4e0" stroke="#000" stroke-width="1"/></svg><div class="hl" style="left:1131px;top:167px;width:19px;height:1px;background:#7ba4dc"></div><svg class="ic" style="left:1129px;top:171.5px" width="20" height="20" viewBox="0 0 20 20"><path d="M8.500 9.500v-3h3l1 1h5v5.500h-9z" fill="#fff" stroke="#000" stroke-width="1.3" /><path d="M7 12.500l3.500 4h-7z" fill="#f0d870" stroke="#a08820" stroke-width="0.6" /><path d="M3 8l5-5" fill="none" stroke="#2050c0" stroke-width="1.3" /><path d="M8.500 2.500l-3 .5l2.500 2.500zM2.500 8.500l3-.5l-2.500-2.500z" fill="#2050c0" stroke="none" stroke-width="0" /></svg><svg class="ic" style="left:1129px;top:194.5px" width="20" height="20" viewBox="0 0 20 20"><rect x="4" y="7" width="13.500" height="10.500" fill="#c4ccd4" stroke="#405060" stroke-width="1"/><path d="M3 3.500h6.500v4.500h-6.500z" fill="#fff" stroke="#000" stroke-width="1.2" /><circle cx="6" cy="12" r="2.200" fill="#2850b0"/><rect x="3.500" y="13.500" width="4" height="3" fill="#283060"/><path d="M11 5.500l6-3.500M13 2l3.500 5.500M11.500 3l5 3" fill="none" stroke="#2860d0" stroke-width="1.1" stroke-dasharray="1.200 .8"/></svg><svg class="ic" style="left:1129px;top:217px" width="20" height="20" viewBox="0 0 20 20"><path d="M3.500 5h5v5h9v7h-14z" fill="#fff" stroke="#000" stroke-width="1.4" /><path d="M10 14.500l6-9.500l2 1.200l-6 9.500z" fill="#c8ccd0" stroke="#505860" stroke-width="0.7" /><path d="M10 14.500l-.5 2.500l2.500-1z" fill="#e8a090" stroke="#804030" stroke-width="0.5" /><path d="M6.500 12.500c2 2 3.500 2.500 5.500 2" fill="none" stroke="#e08878" stroke-width="1.5" /></svg><div class="hl" style="left:1131px;top:242px;width:19px;height:1px;background:#7ba4dc"></div><svg class="ic" style="left:1129px;top:246.5px" width="20" height="20" viewBox="0 0 20 20"><rect x="4" y="6.500" width="12" height="10.500" fill="#fff" stroke="#000" stroke-width="1.300"/><circle cx="10" cy="11.500" r="3" fill="#fff" stroke="#e04018" stroke-width="1.300"/><path d="M5 11.500h10" fill="none" stroke="#000" stroke-width="0.9" /><path d="M3 3v5.500M17.500 3v5.500" fill="none" stroke="#e04018" stroke-width="1.6" /><path d="M3 10l-1.800-2.500h3.600zM17.500 10l-1.800-2.500h3.600z" fill="#e04018" stroke="none" stroke-width="0" /><path d="M3 3h2M17.500 3h-2" fill="none" stroke="#e04018" stroke-width="1.2" /></svg><svg class="ic" style="left:1129px;top:267.5px" width="20" height="20" viewBox="0 0 20 20"><rect x="4.500" y="5" width="13" height="11.500" fill="#fff" stroke="#000" stroke-width="1.400"/><circle cx="11.500" cy="10.500" r="3.200" fill="#b0b8c0" stroke="#000" stroke-width="1.100"/><path d="M9 13l5-5" fill="none" stroke="#000" stroke-width="1" /><path d="M3 4.500v12.500" fill="none" stroke="#e04018" stroke-width="1.6" /><path d="M3 2.500l-1.800 2.500h3.600zM3 19l-1.800-2.500h3.600z" fill="#e04018" stroke="none" stroke-width="0" /><path d="M3 4h3M3 17.500h3" fill="none" stroke="#e04018" stroke-width="1.2" /></svg><svg class="ic" style="left:1129px;top:290.5px" width="20" height="20" viewBox="0 0 20 20"><rect x="2.500" y="3.500" width="15.500" height="13.500" fill="#fff" stroke="#000" stroke-width="1.400"/><rect x="10.500" y="4.500" width="6.500" height="11.500" fill="#a8b4c0"/><path d="M10.500 10l5-5.500M10.500 14.500l6.500-7M12.500 16l4.500-5" fill="none" stroke="#303840" stroke-width="1" /><path d="M8.500 4.500c-3 3-3 8 0 11.500" fill="none" stroke="#d09080" stroke-width="2.2" /><path d="M10 3.500v13.500" fill="none" stroke="#000" stroke-width="1" /></svg><svg class="ic" style="left:1129px;top:313px" width="20" height="20" viewBox="0 0 20 20"><path d="M2.500 6.500v-3h3l1 1h2.500v2zM12 8.500v-5.500l2.500-1.500h2.500v7zM3 11.500h5.500v6h-5.500z" fill="#fff" stroke="#000" stroke-width="1.2" /><path d="M5.500 13.500h5.500v4.500" fill="none" stroke="#000" stroke-width="1.1" /><path d="M16 9l-4.500 4.500h2.200l-1.700 4l5-5h-2.200z" fill="#f4e430" stroke="#b8a010" stroke-width="0.5" /></svg><div id="cmd" class="abs"></div><div id="status" class="abs"><span style="position:absolute;left:2px;top:0px;font-size:12px">命令:</span><div class="sf" style="left:726px;width:80px">空命令</div><div class="sf" style="left:808px;width:231px;letter-spacing:-0.4px">34.102,564.842</div><div class="sf" style="left:1042px;width:54px">屏幕点</div><div class="sf" style="left:1099px;width:50px;background:#fff;top:1px;height:17px;line-height:15px">导航<div style="position:absolute;right:0;top:0;width:16px;height:15px;background:#d5e4fa;border-left:1px solid #7ba4dc"></div><div style="position:absolute;right:4px;top:6px;border:4px solid transparent;border-top:4px solid #000;border-bottom:0"></div></div></div><div id="task" class="abs"><svg width="80" height="30" style="position:absolute;left:0;top:0"><defs><linearGradient id="fg" x1="0" y1="0" x2="1" y2="1"><stop offset="0" stop-color="#b4dcfc"/><stop offset="1" stop-color="#84b8ec"/></linearGradient></defs><path d="M0 2h33l-6 28h-27z" fill="#6a9cdc"/><path d="M0 2h12l-2.600 11c-3.200-1-6.400-.6-9.400.8zM14 2h17.500l-2.600 12.500c-6 .6-11.500 0-17.600-1.600zM0 16.300c3-1.400 5.800-1.600 8.800-.8l-3 14.500h-5.800zM11 16c6 1.600 11.500 2.200 17.500 1.400l-2.700 12.600h-17.800z" fill="url(#fg)"/></svg><div class="b" style="left:40px;top:0;font-size:18px;font-weight:bold;font-style:italic;letter-spacing:-0.4px;line-height:30px;text-shadow:1px 1px 1px #24468c">start</div><svg width="90" height="30" style="position:absolute;left:84px;top:0"><circle cx="10.600" cy="14.500" r="6.300" fill="#2a7cdc"/><path d="M7 15h7.300c0-2.600-1.500-4-3.600-4s-3.700 1.600-3.700 3.800 1.600 3.900 3.800 3.900c1.400 0 2.500-.7 3.200-1.800" stroke="#cfe8fc" stroke-width="1.700" fill="none"/><path d="M3 19.500c-1.500 2.500 1.500 3 5.500.5M17.500 9c1.500-2.500-1-3.500-5-1.200" stroke="#6cb8f4" stroke-width="1.500" fill="none"/><path d="M28.500 7.500h12l-1 9.500h-10z" fill="#7cc0f8" stroke="#c8e4fc" stroke-width=".8"/><path d="M31 17l7 0l1.500 4.500h-10z" fill="#f4ecf4"/><path d="M31.500 21.500h6.500" stroke="#d06070" stroke-width="1.300"/><rect x="50.500" y="8.500" width="12" height="12" rx="2.500" fill="#eef4fc" stroke="#2c4490" stroke-width="1.300"/><path d="M59.500 11.500c-3.500-1.200-5.500.8-5.500 3s2.200 4.200 5.500 3M54.500 14.500h4" stroke="#24388c" stroke-width="1.700" fill="none"/><path d="M59.500 10.500l4-2.500M62 12.500l2.500-.5" stroke="#f09030" stroke-width="1.500"/></svg><div class="b" style="left:160px;font-size:13px;line-height:17px;font-weight:bold">&raquo;</div><svg width="18" height="18" style="position:absolute;left:186px;top:6px"><rect x="5.500" y="1.500" width="11" height="15" fill="#fff" stroke="#a0a8b0"/><path d="M8 5h6M8 8h6M8 11h6M8 14h6" stroke="#b0b8c0"/><rect x="1.500" y="3.500" width="8.500" height="9.500" fill="#e8f4e8" stroke="#2c8c3c" stroke-width="1"/><path d="M3.500 5.500l4.500 5.500M8 5.500l-4.500 5.500" stroke="#1c8030" stroke-width="1.700"/></svg><div class="b" style="left:205px">材料计算07.xls</div><svg width="18" height="18" style="position:absolute;left:346px;top:6px"><rect x="5.500" y="1.500" width="11" height="15" fill="#fff" stroke="#a0a8b0"/><path d="M8 5h6M8 8h6M8 11h6M8 14h6" stroke="#b0b8c0"/><rect x="1.500" y="3.500" width="8.500" height="9.500" fill="#e8f4e8" stroke="#2c8c3c" stroke-width="1"/><path d="M3.500 5.500l4.500 5.500M8 5.500l-4.500 5.500" stroke="#1c8030" stroke-width="1.700"/></svg><div class="b" style="left:366px">电话.xls</div><svg width="18" height="18" style="position:absolute;left:504px;top:6px"><circle cx="9" cy="9" r="7.300" fill="#2c6cd0" stroke="#e8f0fc" stroke-width="1.600"/><path d="M5.500 12.500v-5.500h7v5.500M9 7v5.500" stroke="#fff" stroke-width="1.700" fill="none"/></svg><div class="b" style="left:525px">冲斜孔如何设计凸...</div><svg width="18" height="18" style="position:absolute;left:665px;top:6px"><path d="M1.500 15.500v-11h5l1.500 2h8.500v9z" fill="#f8d868" stroke="#b08820"/><path d="M1.500 15.500l2.500-7h13.500l-2.500 7z" fill="#fce898" stroke="#b08820"/></svg><div class="b" style="left:685px;letter-spacing:-0.5px">C:\Documents and Se...</div><div style="position:absolute;left:818px;top:2px;width:156px;height:27px;background:linear-gradient(#284a8e,#2e529a 60%,#3358a2);border-radius:3px;box-shadow:inset 1px 1px 2px #1c3470"></div><svg width="20" height="20" style="position:absolute;left:824px;top:5px"><circle cx="9" cy="10" r="6.500" fill="none" stroke="#fff" stroke-width="2.200"/><circle cx="9" cy="10" r="2.800" fill="none" stroke="#fff" stroke-width="1.600"/><path d="M2 17l14-14M13 15l5 4" stroke="#fff" stroke-width="1.800"/></svg><div class="b" style="left:846px">E:\wtx\mj\tf\3.exb - ...</div><svg width="18" height="14" style="position:absolute;left:988px;top:9px"><rect x="1" y="2" width="16" height="10" rx="1.500" fill="#f4f4f4" stroke="#202020"/><path d="M3 5h12M3 7h12" stroke="#202020" stroke-dasharray="1 1"/><path d="M5 9.500h8" stroke="#202020"/><path d="M4 1.500v-1.500M14 1.500v-1.500" stroke="#fff"/></svg><div style="position:absolute;left:1023px;top:0;width:129px;height:30px;background:linear-gradient(#2c4c7c 0,#2c4c7c 1px,#7ca4d8 1px,#7ca4d8 2px,#5c8acc 3px,#547cc4 5px,#5c80c4 9px,#628ad0 14px,#6e94d8 19px,#789edc 25px,#789edc 30px);border-left:1px solid #3c5c9c"></div><svg width="80" height="30" style="position:absolute;left:1030px;top:0"><circle cx="12" cy="14.500" r="6.800" fill="#3474d4" stroke="#e8f0fc" stroke-width="1.600"/><path d="M8.500 18v-5.500h7v5.500M12 12.500v5.500" stroke="#fff" stroke-width="1.700" fill="none"/><ellipse cx="30" cy="15" rx="6" ry="7.500" fill="#1c2c9c" stroke="#e8ecfc" stroke-width="1.200"/><path d="M27.500 19.500v-9l5 9v-9" stroke="#fff" stroke-width="2" fill="none"/><rect x="41" y="9" width="8" height="8" fill="#3c4494" stroke="#c8d0e8" stroke-width=".8"/><rect x="44.500" y="6" width="8" height="8" fill="#5860b0" stroke="#c8d0e8" stroke-width=".8"/><path d="M50 10l5.500 10.500h-11z" fill="#f8e020" stroke="#806c00" stroke-width=".8"/><path d="M50 13.500v3.500M50 18.200v1.200" stroke="#000" stroke-width="1.500"/><circle cx="66" cy="13" r="5.500" fill="#8c94a0" stroke="#d0d4dc" stroke-width="1"/><circle cx="64.500" cy="12" r="2.200" fill="#e8ecf0"/><path d="M70 17.500l3 3.500" stroke="#a8b0d8" stroke-width="1.500"/></svg><div class="b" style="left:1111px;font-size:11.500px;line-height:29px">17:17</div></div><div class="abs" style="left:0;top:0;width:33px;height:50px;background:#5b8fdc;border-right:1px solid #4478c8;border-bottom:2px solid #4478c8"><div style="position:absolute;left:14px;top:5px;width:13px;height:13px;border-radius:2px;background:linear-gradient(#3a7cb4,#5cb0d0);border:1px solid #2c5c94"></div><svg width="33" height="20" style="position:absolute;left:0;top:0"><path d="M18 9.500l4.500 4.500m0-4.500l-4.500 4.500" stroke="#cfe8f8" stroke-width="1" fill="none"/><path d="M4 8v3M4 13h4M4 16h4M10 14v2" stroke="#fff" stroke-width="1.6"/></svg><div style="position:absolute;left:4px;top:22px;width:25px;height:24px;background:#d5e3f8"></div><svg width="33" height="50" style="position:absolute;left:0;top:0"><rect x="9.500" y="27.500" width="13" height="13.300" rx="1.500" fill="none" stroke="#000" stroke-width="1.300"/><path d="M11.800 30.200h8.500v7.800h-8.500M15 34h5.300" stroke="#000" stroke-width="1.200" fill="none"/></svg></div></body></html>
